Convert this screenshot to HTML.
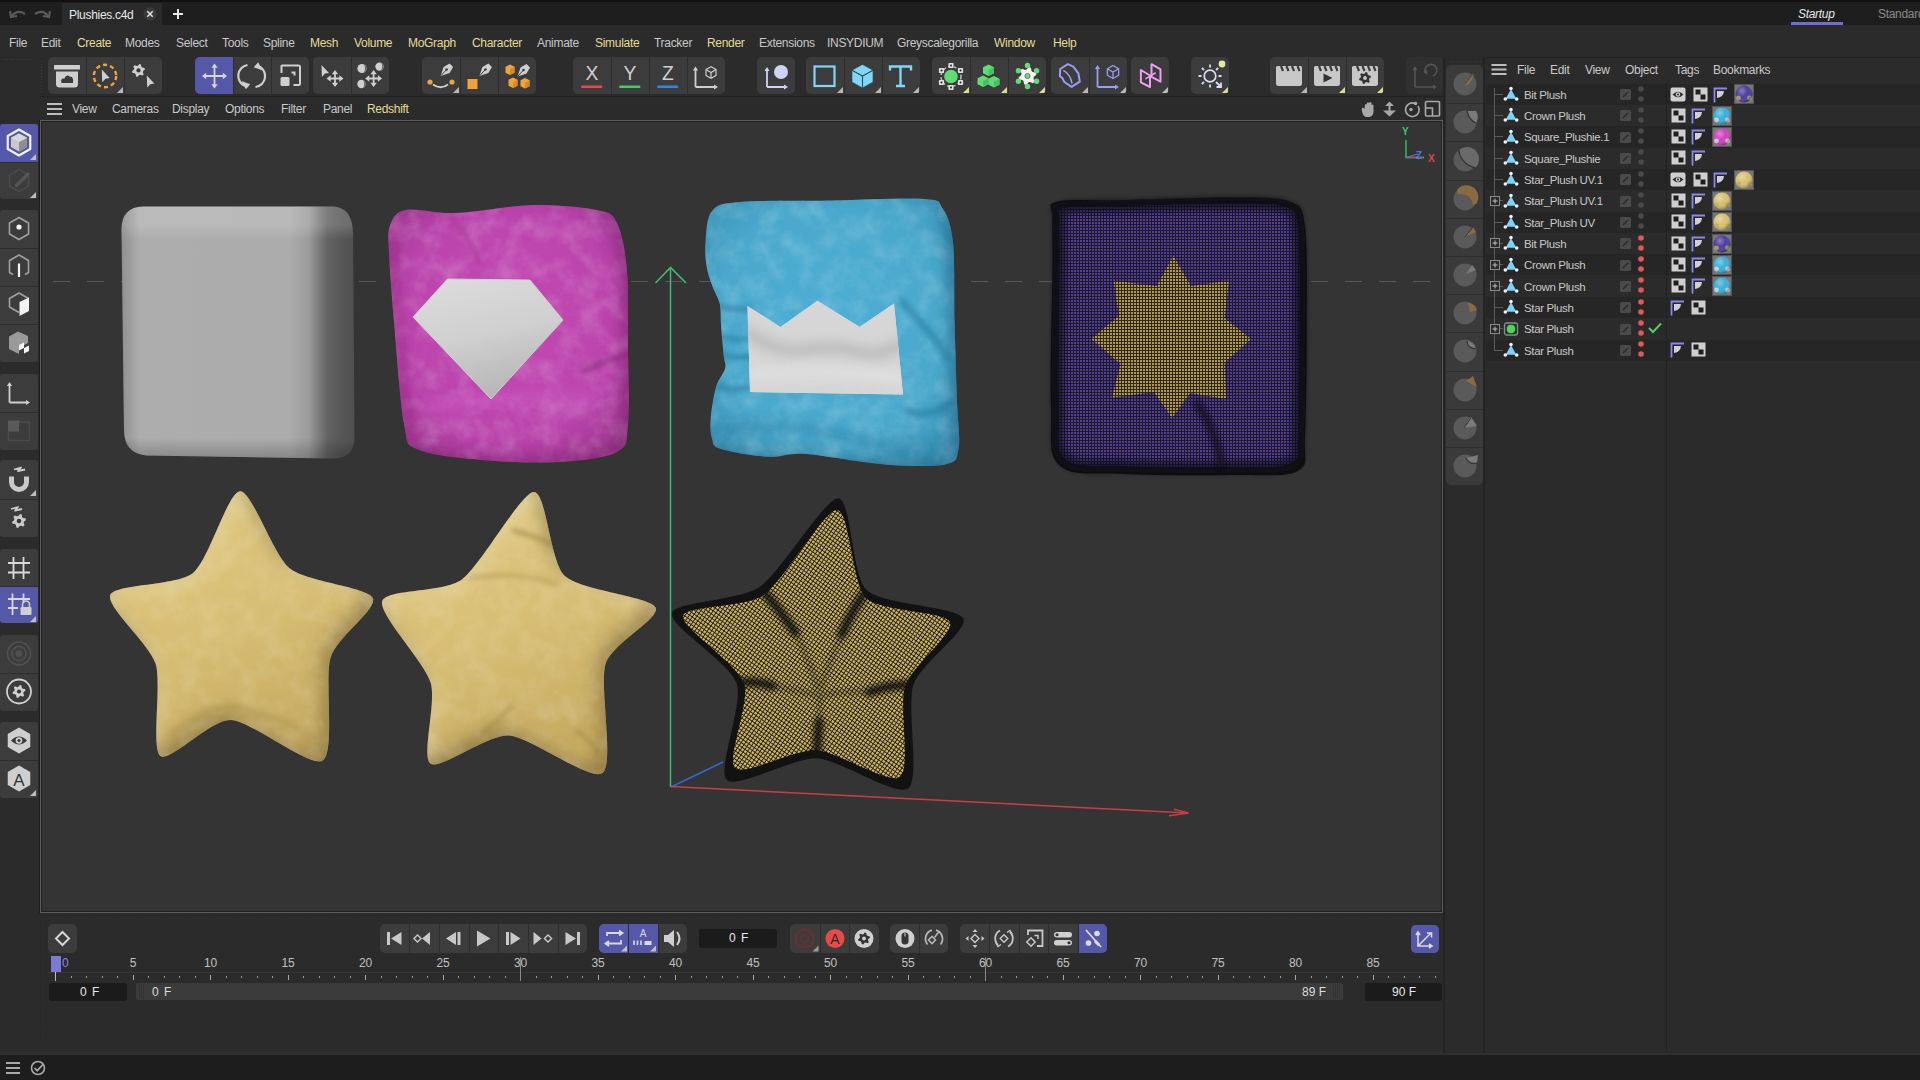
<!DOCTYPE html><html><head><meta charset="utf-8"><style>
*{box-sizing:border-box}
body{margin:0;width:1920px;height:1080px;position:relative;overflow:hidden;background:#2b2b2b;font-family:'Liberation Sans', sans-serif;color:#c8c8c8}
.ab{position:absolute}
.t{position:absolute;font-size:12px;white-space:nowrap;letter-spacing:-0.3px;line-height:14px}
.y{color:#e3dc92}
svg{position:absolute;overflow:visible}
</style></head><body>

<div class="ab" style="left:0;top:0;width:1920px;height:25px;background:#1e1e1e"></div>
<div class="ab" style="left:0;top:0;width:1920px;height:2px;background:#101010"></div>
<div class="ab" style="left:62px;top:3px;width:100px;height:22px;background:#2a2a2a"></div>
<div class="t" style="left:69px;top:8px;color:#e8e8e8">Plushies.c4d</div>
<svg style="left:8px;top:5px" width="50" height="16" viewBox="0 0 50 16" ><path d="M4 11 Q9 4 17 9" stroke="#5a5a5a" stroke-width="2.2" fill="none"/><path d="M2 6 L3 12 L9 11" stroke="#5a5a5a" stroke-width="2.2" fill="none"/><path d="M40 11 Q35 4 27 9" stroke="#5a5a5a" stroke-width="2.2" fill="none"/><path d="M42 6 L41 12 L35 11" stroke="#5a5a5a" stroke-width="2.2" fill="none"/></svg>
<svg style="left:143px;top:7px" width="14" height="14" viewBox="0 0 14 14" ><circle cx="7" cy="7" r="6.5" fill="#3a3a3a"/><path d="M4.3 4.3 L9.7 9.7 M9.7 4.3 L4.3 9.7" stroke="#e0e0e0" stroke-width="1.6"/></svg>
<svg style="left:172px;top:8px" width="12" height="12" viewBox="0 0 12 12" ><path d="M6 1 V11 M1 6 H11" stroke="#e6e6e6" stroke-width="2"/></svg>
<div class="t" style="left:1798px;top:7px;color:#e6e6e6;font-style:italic">Startup</div>
<div class="ab" style="left:1791px;top:22px;width:52px;height:3px;background:#6e6ed0"></div>
<div class="t" style="left:1878px;top:7px;color:#8a8a8a">Standard</div>
<div class="t" style="left:9px;top:36px">File</div>
<div class="t" style="left:41px;top:36px">Edit</div>
<div class="t y" style="left:77px;top:36px">Create</div>
<div class="t" style="left:125px;top:36px">Modes</div>
<div class="t" style="left:176px;top:36px">Select</div>
<div class="t" style="left:222px;top:36px">Tools</div>
<div class="t" style="left:263px;top:36px">Spline</div>
<div class="t y" style="left:310px;top:36px">Mesh</div>
<div class="t y" style="left:354px;top:36px">Volume</div>
<div class="t y" style="left:408px;top:36px">MoGraph</div>
<div class="t y" style="left:472px;top:36px">Character</div>
<div class="t" style="left:537px;top:36px">Animate</div>
<div class="t y" style="left:595px;top:36px">Simulate</div>
<div class="t" style="left:654px;top:36px">Tracker</div>
<div class="t y" style="left:707px;top:36px">Render</div>
<div class="t" style="left:759px;top:36px">Extensions</div>
<div class="t" style="left:827px;top:36px">INSYDIUM</div>
<div class="t" style="left:897px;top:36px">Greyscalegorilla</div>
<div class="t y" style="left:994px;top:36px">Window</div>
<div class="t y" style="left:1053px;top:36px">Help</div>
<div class="ab" style="left:3px;top:58px;width:34px;height:3px;background-image:radial-gradient(circle,#3c3c3c 0.8px,transparent 1px);background-size:3px 3px"></div>
<div class="ab" style="left:40px;top:60px;width:3px;height:33px;background-image:radial-gradient(circle,#3c3c3c 0.8px,transparent 1px);background-size:3px 3px"></div>
<div class="ab" style="left:48px;top:57px;width:114px;height:37px;background:#3c3c3c;border-radius:5px;overflow:hidden">
<svg style="left:0px;top:0px" width="38" height="37" viewBox="0 0 38 37" ><rect x="6" y="8" width="26" height="4.5" rx="0.5" fill="#cfcfcf"/><path d="M8 14.5 H30 V27 Q30 30.5 26.5 30.5 H11.5 Q8 30.5 8 27 Z" fill="#cfcfcf"/><path d="M13.5 26 Q12 21 16.5 21.5 Q18 17 21.5 19.5 Q26 19 25 26 Z" fill="#3c3c3c"/></svg>
<div class="ab" style="left:38px;top:0;width:1px;height:37px;background:#2e2e2e"></div>
<svg style="left:38px;top:0px" width="38" height="37" viewBox="0 0 38 37" ><circle cx="19" cy="19" r="11.2" fill="none" stroke="#f0a33a" stroke-width="2.4" stroke-dasharray="4.2 3"/><path d="M15.8 12.6 L23.675 21.0 L19.475 21.63 L16.220000000000002 25.200000000000003 Z" fill="#cfcfcf"/><path d="M37 30 L37 36 L31 36 Z" fill="#b8b8b8"/></svg>
<div class="ab" style="left:76px;top:0;width:1px;height:37px;background:#2e2e2e"></div>
<svg style="left:76px;top:0px" width="38" height="37" viewBox="0 0 38 37" ><polygon points="15.35,6.96 16.99,7.39 17.35,9.69 18.21,10.55 20.51,10.91 20.94,12.55 19.14,14.01 18.82,15.19 19.66,17.36 18.46,18.56 16.29,17.72 15.11,18.04 13.65,19.84 12.01,19.41 11.65,17.11 10.79,16.25 8.49,15.89 8.06,14.25 9.86,12.79 10.18,11.61 9.34,9.44 10.54,8.24 12.71,9.08 13.89,8.76" fill="#cfcfcf"/><circle cx="14.5" cy="13.4" r="2.145" fill="#3a3a3a"/><path d="M22.8 18.6 L30.3 26.6 L26.3 27.200000000000003 L23.2 30.6 Z" fill="#cfcfcf"/></svg>
</div>
<div class="ab" style="left:195px;top:57px;width:114px;height:37px;background:#3c3c3c;border-radius:5px;overflow:hidden">
<div class="ab" style="left:0px;top:0px;width:38px;height:37px;background:#5558a8"></div>
<svg style="left:0px;top:0px" width="38" height="37" viewBox="0 0 38 37" ><path d="M9.0 19 H30.0 M19.5 8.5 V29.5" stroke="#d6d6d6" stroke-width="1.8"/><path d="M7.0 19 L11.2 15.8 V22.2 Z M32.0 19 L27.8 15.8 V22.2 Z M19.5 6.5 L16.3 10.7 H22.7 Z M19.5 31.5 L16.3 27.3 H22.7 Z" fill="#d6d6d6"/></svg>
<div class="ab" style="left:38px;top:0;width:1px;height:37px;background:#2e2e2e"></div>
<svg style="left:38px;top:0px" width="38" height="37" viewBox="0 0 38 37" ><path d="M14.5 8 A11 11 0 0 0 12 29" stroke="#cfcfcf" stroke-width="2.2" fill="none"/><path d="M9.5 24.5 L13 31 L16.5 27" fill="#cfcfcf" stroke="#cfcfcf" stroke-width="1.5"/><path d="M22.5 30 A11 11 0 0 0 25.5 9" stroke="#cfcfcf" stroke-width="2.2" fill="none"/><path d="M28.5 13 L25 6.5 L21.5 10.5" fill="#cfcfcf" stroke="#cfcfcf" stroke-width="1.5"/></svg>
<div class="ab" style="left:76px;top:0;width:1px;height:37px;background:#2e2e2e"></div>
<svg style="left:76px;top:0px" width="38" height="37" viewBox="0 0 38 37" ><path d="M10.5 16 V10 Q10 8.5 11.5 8.5 H27.5 Q29 8.5 29 10 V26.5 Q29 28 27.5 28 H22.5" stroke="#cfcfcf" stroke-width="2" fill="none"/><rect x="9.5" y="20" width="9" height="9" rx="1.5" fill="#cfcfcf"/><path d="M20.5 15.5 H23.5 V18.5" stroke="#cfcfcf" stroke-width="2" fill="none"/></svg>
</div>
<div class="ab" style="left:313px;top:57px;width:76px;height:37px;background:#3c3c3c;border-radius:5px;overflow:hidden">
<svg style="left:0px;top:0px" width="38" height="37" viewBox="0 0 38 37" ><path d="M8.5 8 L16.0 16.0 L12.0 16.6 L8.9 20.0 Z" fill="#cfcfcf"/><path d="M15.5 21.5 H28.5 M22 15.0 V28.0" stroke="#cfcfcf" stroke-width="1.8"/><path d="M13.5 21.5 L17.7 18.3 V24.7 Z M30.5 21.5 L26.3 18.3 V24.7 Z M22 13.0 L18.8 17.2 H25.2 Z M22 30.0 L18.8 25.8 H25.2 Z" fill="#cfcfcf"/></svg>
<div class="ab" style="left:38px;top:0;width:1px;height:37px;background:#2e2e2e"></div>
<svg style="left:38px;top:0px" width="38" height="37" viewBox="0 0 38 37" ><circle cx="11" cy="11.5" r="4.6" fill="#cfcfcf"/><path d="M11.92 6.99 A4.6 4.6 0 0 1 11.92 16.01 A2.53 4.6 0 0 0 11.92 6.99 Z" fill="#6a6a6a"/><circle cx="28.5" cy="9.6" r="4.2" fill="#cfcfcf"/><path d="M29.34 5.48 A4.2 4.2 0 0 1 29.34 13.72 A2.31 4.2 0 0 0 29.34 5.48 Z" fill="#6a6a6a"/><circle cx="10.5" cy="27" r="4.2" fill="#cfcfcf"/><path d="M11.34 22.88 A4.2 4.2 0 0 1 11.34 31.12 A2.31 4.2 0 0 0 11.34 22.88 Z" fill="#6a6a6a"/><path d="M16.1 21.5 H29.1 M22.6 15.0 V28.0" stroke="#cfcfcf" stroke-width="1.8"/><path d="M14.100000000000001 21.5 L18.3 18.3 V24.7 Z M31.1 21.5 L26.900000000000002 18.3 V24.7 Z M22.6 13.0 L19.400000000000002 17.2 H25.8 Z M22.6 30.0 L19.400000000000002 25.8 H25.8 Z" fill="#cfcfcf"/></svg>
</div>
<div class="ab" style="left:422px;top:57px;width:114px;height:37px;background:#3c3c3c;border-radius:5px;overflow:hidden">
<svg style="left:0px;top:0px" width="38" height="37" viewBox="0 0 38 37" ><g transform="translate(18.6,19) scale(1.0)"><path d="M0 0 L3 -9 L9 -12.5 L12.5 -9 L9 -3 Z" fill="#cfcfcf"/><circle cx="6" cy="-6.5" r="1.3" fill="#3c3c3c"/><path d="M0.5 -0.5 L5.5 -6" stroke="#3c3c3c" stroke-width="1"/></g><path d="M11 27.5 Q18.5 33 26 27.5" stroke="#cfcfcf" stroke-width="2" fill="none"/><circle cx="8" cy="25" r="2.6" fill="#f0a33a"/><circle cx="30" cy="25" r="2.6" fill="#f0a33a"/><path d="M37 30 L37 36 L31 36 Z" fill="#b8b8b8"/></svg>
<div class="ab" style="left:38px;top:0;width:1px;height:37px;background:#2e2e2e"></div>
<svg style="left:38px;top:0px" width="38" height="37" viewBox="0 0 38 37" ><rect x="7.5" y="22" width="10" height="10" fill="#f0a33a"/><g transform="translate(19.4,19) scale(1.0)"><path d="M0 0 L3 -9 L9 -12.5 L12.5 -9 L9 -3 Z" fill="#cfcfcf"/><circle cx="6" cy="-6.5" r="1.3" fill="#3c3c3c"/><path d="M0.5 -0.5 L5.5 -6" stroke="#3c3c3c" stroke-width="1"/></g></svg>
<div class="ab" style="left:76px;top:0;width:1px;height:37px;background:#2e2e2e"></div>
<svg style="left:76px;top:0px" width="38" height="37" viewBox="0 0 38 37" ><g transform="translate(12,12.5)"><path d="M0 -4.95 L4.5 -2.6999999999999997 V3.15 L0 5.3999999999999995 L-4.5 3.15 V-2.6999999999999997 Z" fill="#f0a33a"/><path d="M0 0 V5.3999999999999995 L4.5 3.15 V-2.6999999999999997 Z" fill="#d88a28"/></g><g transform="translate(15,25.5)"><path d="M0 -4.95 L4.5 -2.6999999999999997 V3.15 L0 5.3999999999999995 L-4.5 3.15 V-2.6999999999999997 Z" fill="#f0a33a"/><path d="M0 0 V5.3999999999999995 L4.5 3.15 V-2.6999999999999997 Z" fill="#d88a28"/></g><g transform="translate(27,26)"><path d="M0 -4.95 L4.5 -2.6999999999999997 V3.15 L0 5.3999999999999995 L-4.5 3.15 V-2.6999999999999997 Z" fill="#f0a33a"/><path d="M0 0 V5.3999999999999995 L4.5 3.15 V-2.6999999999999997 Z" fill="#d88a28"/></g><g transform="translate(19.5,19.5) scale(1.0)"><path d="M0 0 L3 -9 L9 -12.5 L12.5 -9 L9 -3 Z" fill="#cfcfcf"/><circle cx="6" cy="-6.5" r="1.3" fill="#3c3c3c"/><path d="M0.5 -0.5 L5.5 -6" stroke="#3c3c3c" stroke-width="1"/></g></svg>
</div>
<div class="ab" style="left:573px;top:57px;width:152px;height:37px;background:#3c3c3c;border-radius:5px;overflow:hidden">
<svg style="left:0px;top:0px" width="38" height="37" viewBox="0 0 38 37" ><text x="19" y="23.5" font-size="21" text-anchor="middle" fill="#cfcfcf" font-family="Liberation Sans" transform="translate(19,0) scale(0.92,1) translate(-19,0)">X</text><rect x="8" y="28.5" width="21.5" height="2.4" rx="1.2" fill="#e5484d"/></svg>
<div class="ab" style="left:38px;top:0;width:1px;height:37px;background:#2e2e2e"></div>
<svg style="left:38px;top:0px" width="38" height="37" viewBox="0 0 38 37" ><text x="19" y="23.5" font-size="21" text-anchor="middle" fill="#cfcfcf" font-family="Liberation Sans" transform="translate(19,0) scale(0.92,1) translate(-19,0)">Y</text><rect x="8" y="28.5" width="21.5" height="2.4" rx="1.2" fill="#3fd160"/></svg>
<div class="ab" style="left:76px;top:0;width:1px;height:37px;background:#2e2e2e"></div>
<svg style="left:76px;top:0px" width="38" height="37" viewBox="0 0 38 37" ><text x="19" y="23.5" font-size="21" text-anchor="middle" fill="#cfcfcf" font-family="Liberation Sans" transform="translate(19,0) scale(0.92,1) translate(-19,0)">Z</text><rect x="8" y="28.5" width="21.5" height="2.4" rx="1.2" fill="#2f86e6"/></svg>
<div class="ab" style="left:114px;top:0;width:1px;height:37px;background:#2e2e2e"></div>
<svg style="left:114px;top:0px" width="38" height="37" viewBox="0 0 38 37" ><path d="M8.5 30 V12.5 M8.5 30 H28" stroke="#cfcfcf" stroke-width="1.8" fill="none"/><path d="M8.5 9.5 L5.9 13.5 H11.1 Z M31 30 L27 27.4 V32.6 Z" fill="#cfcfcf"/><polygon points="24.00,9.70 29.02,12.60 29.02,18.40 24.00,21.30 18.98,18.40 18.98,12.60" fill="none" stroke="#cfcfcf" stroke-width="1.2" stroke-linejoin="round"/><path d="M18.98 12.60 L24 15.5 L29.02 12.60 M24 15.5 L24.00 21.30" stroke="#cfcfcf" stroke-width="1.2" fill="none"/></svg>
</div>
<div class="ab" style="left:757px;top:57px;width:38px;height:37px;background:#3c3c3c;border-radius:5px;overflow:hidden">
<svg style="left:0px;top:0px" width="38" height="37" viewBox="0 0 38 37" ><path d="M10 30 V13 M10 30 H28" stroke="#cfd3f5" stroke-width="1.8" fill="none"/><path d="M10 10 L7.4 14 H12.6 Z M31 30 L27 27.4 V32.6 Z" fill="#cfd3f5"/><circle cx="24" cy="15" r="7" fill="#cfd3f5"/></svg>
</div>
<div class="ab" style="left:806px;top:57px;width:114px;height:37px;background:#3c3c3c;border-radius:5px;overflow:hidden">
<svg style="left:0px;top:0px" width="38" height="37" viewBox="0 0 38 37" ><rect x="8.5" y="9.5" width="20" height="19.5" fill="none" stroke="#7fd6f7" stroke-width="2.2"/><path d="M37 30 L37 36 L31 36 Z" fill="#b8b8b8"/></svg>
<div class="ab" style="left:38px;top:0;width:1px;height:37px;background:#2e2e2e"></div>
<svg style="left:38px;top:0px" width="38" height="37" viewBox="0 0 38 37" ><path d="M18.5 7.5 L29 13.2 V25 L18.5 31 L8 25 V13.2 Z" fill="#7fd6f7" stroke="#2c4a55" stroke-width="0.6"/><path d="M8 13.2 L18.5 19 L29 13.2 M18.5 19 V31" stroke="#2c4e5a" stroke-width="1.1" fill="none"/><path d="M37 30 L37 36 L31 36 Z" fill="#b8b8b8"/></svg>
<div class="ab" style="left:76px;top:0;width:1px;height:37px;background:#2e2e2e"></div>
<svg style="left:76px;top:0px" width="38" height="37" viewBox="0 0 38 37" ><path d="M8 13.5 V9.5 H29 V13.5 M18.5 9.5 V29 M14 29 H23" stroke="#7fd6f7" stroke-width="2.4" fill="none"/><path d="M37 30 L37 36 L31 36 Z" fill="#b8b8b8"/></svg>
</div>
<div class="ab" style="left:932px;top:57px;width:114px;height:37px;background:#3c3c3c;border-radius:5px;overflow:hidden">
<svg style="left:0px;top:0px" width="38" height="37" viewBox="0 0 38 37" ><circle cx="19" cy="19.5" r="10" fill="none" stroke="#bdbdbd" stroke-width="1.5" stroke-dasharray="3 2.5"/><circle cx="19" cy="19.5" r="6.8" fill="#5fdc74"/><rect x="16.4" y="5.9" width="5.2" height="5.2" rx="0.8" fill="#e0e0e0"/><circle cx="19" cy="8.5" r="1" fill="#222"/><rect x="16.4" y="27.9" width="5.2" height="5.2" rx="0.8" fill="#e0e0e0"/><circle cx="19" cy="30.5" r="1" fill="#222"/><rect x="6.9" y="10.9" width="5.2" height="5.2" rx="0.8" fill="#e0e0e0"/><circle cx="9.5" cy="13.5" r="1" fill="#222"/><rect x="25.9" y="10.9" width="5.2" height="5.2" rx="0.8" fill="#e0e0e0"/><circle cx="28.5" cy="13.5" r="1" fill="#222"/><rect x="6.9" y="22.9" width="5.2" height="5.2" rx="0.8" fill="#e0e0e0"/><circle cx="9.5" cy="25.5" r="1" fill="#222"/><rect x="25.9" y="22.9" width="5.2" height="5.2" rx="0.8" fill="#e0e0e0"/><circle cx="28.5" cy="25.5" r="1" fill="#222"/><path d="M37 30 L37 36 L31 36 Z" fill="#dedc8a"/></svg>
<div class="ab" style="left:38px;top:0;width:1px;height:37px;background:#2e2e2e"></div>
<svg style="left:38px;top:0px" width="38" height="37" viewBox="0 0 38 37" ><g transform="translate(18.5,13)"><path d="M0 -5.5 L5.5 -2.75 V3.3 L0 6.050000000000001 L-5.5 3.3 V-2.75 Z" fill="#5fdc74"/><path d="M0 0 V6.050000000000001 L5.5 3.3 V-2.75 Z" fill="#4cbf60"/></g><g transform="translate(13,24)"><path d="M0 -5.5 L5.5 -2.75 V3.3 L0 6.050000000000001 L-5.5 3.3 V-2.75 Z" fill="#5fdc74"/><path d="M0 0 V6.050000000000001 L5.5 3.3 V-2.75 Z" fill="#4cbf60"/></g><g transform="translate(24,24.5)"><path d="M0 -5.5 L5.5 -2.75 V3.3 L0 6.050000000000001 L-5.5 3.3 V-2.75 Z" fill="#5fdc74"/><path d="M0 0 V6.050000000000001 L5.5 3.3 V-2.75 Z" fill="#4cbf60"/></g><path d="M37 30 L37 36 L31 36 Z" fill="#dedc8a"/></svg>
<div class="ab" style="left:76px;top:0;width:1px;height:37px;background:#2e2e2e"></div>
<svg style="left:76px;top:0px" width="38" height="37" viewBox="0 0 38 37" ><polygon points="20.67,10.08 22.94,10.69 23.44,13.86 24.64,15.06 27.81,15.56 28.42,17.83 25.92,19.85 25.49,21.48 26.64,24.48 24.98,26.14 21.98,24.99 20.35,25.42 18.33,27.92 16.06,27.31 15.56,24.14 14.36,22.94 11.19,22.44 10.58,20.17 13.08,18.15 13.51,16.52 12.36,13.52 14.02,11.86 17.02,13.01 18.65,12.58" fill="#f2f2f2"/><circle cx="19.5" cy="19" r="2.8" fill="#3c3c3c"/><circle cx="19.5" cy="19" r="2.4" fill="#5fdc74"/><circle cx="19.50" cy="8.50" r="2.7" fill="#5fdc74"/><circle cx="10.41" cy="13.75" r="2.7" fill="#5fdc74"/><circle cx="10.41" cy="24.25" r="2.7" fill="#5fdc74"/><circle cx="19.50" cy="29.50" r="2.7" fill="#5fdc74"/><circle cx="28.59" cy="24.25" r="2.7" fill="#5fdc74"/><circle cx="28.59" cy="13.75" r="2.7" fill="#5fdc74"/><path d="M37 30 L37 36 L31 36 Z" fill="#dedc8a"/></svg>
</div>
<div class="ab" style="left:1051px;top:57px;width:76px;height:37px;background:#3c3c3c;border-radius:5px;overflow:hidden">
<svg style="left:0px;top:0px" width="38" height="37" viewBox="0 0 38 37" ><path d="M9.2 12 L16.8 7.2 L22.3 9.6 L27.4 16.4 L28.8 24.7 L20.5 29.8 L13.4 25 L11.3 20.9 L8.9 19.2 Z" fill="none" stroke="#9c9cf5" stroke-width="2" stroke-linejoin="round"/><path d="M12.7 13.7 Q19 17 20.9 26" stroke="#9c9cf5" stroke-width="1.5" fill="none" stroke-linecap="round"/><path d="M37 30 L37 36 L31 36 Z" fill="#b8b8b8"/></svg>
<div class="ab" style="left:38px;top:0;width:1px;height:37px;background:#2e2e2e"></div>
<svg style="left:38px;top:0px" width="38" height="37" viewBox="0 0 38 37" ><path d="M8.5 30 V11 M8.5 30 H27" stroke="#9c9cf5" stroke-width="1.8" fill="none"/><path d="M8.5 8 L5.9 12 H11.1 Z M30 30 L26 27.4 V32.6 Z" fill="#9c9cf5"/><polygon points="24.00,8.50 29.63,11.75 29.63,18.25 24.00,21.50 18.37,18.25 18.37,11.75" fill="none" stroke="#9c9cf5" stroke-width="1.3" stroke-linejoin="round"/><path d="M18.37 11.75 L24 15 L29.63 11.75 M24 15 L24.00 21.50" stroke="#9c9cf5" stroke-width="1.3" fill="none"/><path d="M37 30 L37 36 L31 36 Z" fill="#b8b8b8"/></svg>
</div>
<div class="ab" style="left:1131px;top:57px;width:38px;height:37px;background:#3c3c3c;border-radius:5px;overflow:hidden">
<svg style="left:0px;top:0px" width="38" height="37" viewBox="0 0 38 37" ><path d="M9.9 13 L19 18.5 V30 L9.9 25.3 Z M20.5 7.2 L29.5 12.3 V24.7 L20.5 19.9 Z" fill="none" stroke="#ee9df2" stroke-width="2" stroke-linejoin="round"/><path d="M14.4 21.9 L24.7 15.8" stroke="#ee9df2" stroke-width="1.6"/><path d="M37 30 L37 36 L31 36 Z" fill="#b8b8b8"/></svg>
</div>
<div class="ab" style="left:1191px;top:57px;width:38px;height:37px;background:#3c3c3c;border-radius:5px;overflow:hidden">
<svg style="left:0px;top:0px" width="38" height="37" viewBox="0 0 38 37" ><circle cx="19" cy="19" r="5.8" fill="none" stroke="#d7def5" stroke-width="1.7"/><path d="M27.50 19.00 L30.50 19.00" stroke="#d7def5" stroke-width="1.8"/><path d="M19.00 27.50 L19.00 30.50" stroke="#d7def5" stroke-width="1.8"/><path d="M12.99 25.01 L10.87 27.13" stroke="#d7def5" stroke-width="1.8"/><path d="M10.50 19.00 L7.50 19.00" stroke="#d7def5" stroke-width="1.8"/><path d="M12.99 12.99 L10.87 10.87" stroke="#d7def5" stroke-width="1.8"/><path d="M19.00 10.50 L19.00 7.50" stroke="#d7def5" stroke-width="1.8"/><path d="M25.01 12.99 L27.13 10.87" stroke="#d7def5" stroke-width="1.8"/><path d="M25 25 L30 30 M30 25.5 V30 H25.5" stroke="#d7def5" stroke-width="1.8" fill="none"/><circle cx="31" cy="7" r="3.4" fill="#e6e6a6"/><path d="M37 30 L37 36 L31 36 Z" fill="#dedc8a"/></svg>
</div>
<div class="ab" style="left:1270px;top:57px;width:114px;height:37px;background:#3c3c3c;border-radius:5px;overflow:hidden">
<svg style="left:0px;top:0px" width="38" height="37" viewBox="0 0 38 37" ><path d="M6 10.5 Q6 9 7.5 9 H30.5 Q32 9 32 10.5 V26.5 Q32 29 29.5 29 H8.5 Q6 29 6 26.5 Z" fill="#c8c8c8"/><path d="M11 9 L13 14 M16.5 9 L18.5 14 M22 9 L24 14 M27.5 9 L29.5 14" stroke="#3c3c3c" stroke-width="2.2"/><path d="M37 30 L37 36 L31 36 Z" fill="#b8b8b8"/></svg>
<div class="ab" style="left:38px;top:0;width:1px;height:37px;background:#2e2e2e"></div>
<svg style="left:38px;top:0px" width="38" height="37" viewBox="0 0 38 37" ><path d="M6 10.5 Q6 9 7.5 9 H30.5 Q32 9 32 10.5 V26.5 Q32 29 29.5 29 H8.5 Q6 29 6 26.5 Z" fill="#c8c8c8"/><path d="M11 9 L13 14 M16.5 9 L18.5 14 M22 9 L24 14 M27.5 9 L29.5 14" stroke="#3c3c3c" stroke-width="2.2"/><path d="M15.5 16.5 L24.5 21 L15.5 25.5 Z" fill="#333"/><path d="M37 30 L37 36 L31 36 Z" fill="#dedc8a"/></svg>
<div class="ab" style="left:76px;top:0;width:1px;height:37px;background:#2e2e2e"></div>
<svg style="left:76px;top:0px" width="38" height="37" viewBox="0 0 38 37" ><path d="M6 10.5 Q6 9 7.5 9 H30.5 Q32 9 32 10.5 V26.5 Q32 29 29.5 29 H8.5 Q6 29 6 26.5 Z" fill="#c8c8c8"/><path d="M11 9 L13 14 M16.5 9 L18.5 14 M22 9 L24 14 M27.5 9 L29.5 14" stroke="#3c3c3c" stroke-width="2.2"/><polygon points="19.78,15.05 21.30,15.46 21.63,17.57 22.43,18.37 24.54,18.70 24.95,20.22 23.28,21.56 22.99,22.65 23.76,24.65 22.65,25.76 20.65,24.99 19.56,25.28 18.22,26.95 16.70,26.54 16.37,24.43 15.57,23.63 13.46,23.30 13.05,21.78 14.72,20.44 15.01,19.35 14.24,17.35 15.35,16.24 17.35,17.01 18.44,16.72" fill="#333"/><circle cx="19" cy="21" r="1.9" fill="#c8c8c8"/><path d="M37 30 L37 36 L31 36 Z" fill="#dedc8a"/></svg>
</div>
<div class="ab" style="left:1406px;top:57px;width:38px;height:37px;background:#303030;border-radius:5px;overflow:hidden">
<svg style="left:0px;top:0px" width="38" height="37" viewBox="0 0 38 37" ><path d="M9 30 V12 M9 30 H28" stroke="#555555" stroke-width="1.6" fill="none"/><path d="M9 9 L6.4 13 H11.6 Z M31 30 L27 27.4 V32.6 Z" fill="#555555"/><path d="M19.5 16 A6 6 0 1 1 27 19" stroke="#555555" stroke-width="1.6" fill="none"/><path d="M17 15 L21 12.5 L21.5 17.5 Z" fill="#555555"/></svg>
</div>
<div class="ab" style="left:40px;top:96px;width:1404px;height:24px;background:#2b2b2b;border-top:1px solid #222"></div>
<svg style="left:47px;top:102px" width="16" height="14" viewBox="0 0 16 14" ><path d="M0 2 H15 M0 7 H15 M0 12 H15" stroke="#bdbdbd" stroke-width="2"/></svg>
<div class="t" style="left:72px;top:102px">View</div>
<div class="t" style="left:112px;top:102px">Cameras</div>
<div class="t" style="left:172px;top:102px">Display</div>
<div class="t" style="left:225px;top:102px">Options</div>
<div class="t" style="left:281px;top:102px">Filter</div>
<div class="t" style="left:323px;top:102px">Panel</div>
<div class="t y" style="left:367px;top:102px">Redshift</div>
<svg style="left:1360px;top:100px" width="84" height="18" viewBox="0 0 84 18" ><path d="M4 16 Q1 11 2 8 Q3 7 4.5 9 L5 5 Q5.5 3.5 6.5 4.5 L7 3 Q8 1.5 9 3 L9.5 2.5 Q10.8 1.5 11.5 3 V5 Q12.8 4 13.5 5.5 L13.5 12 Q13 16 10 17 H6 Z" fill="#a8a8a8"/><path d="M29.5 1.5 L25 6 H34 Z M29.5 16.5 L23 10.5 H36 Z" fill="#a8a8a8"/><rect x="28.5" y="5" width="2" height="6" fill="#a8a8a8"/><path d="M55 3.5 A6.8 6.8 0 1 0 58 6" stroke="#a8a8a8" stroke-width="1.6" fill="none"/><circle cx="51" cy="9.5" r="1.7" fill="#a8a8a8"/><circle cx="55.5" cy="3.5" r="1.8" fill="#a8a8a8"/><rect x="65.5" y="1.5" width="14" height="14.5" rx="1" fill="none" stroke="#a8a8a8" stroke-width="1.6"/><path d="M65.5 8 H72.5 V16" stroke="#a8a8a8" stroke-width="1.6" fill="none"/></svg>
<div class="ab" style="left:40px;top:120px;width:1403px;height:793px;background:#343434;border:1px solid #5c5c5c;box-shadow:inset 0 0 0 1px #222"></div>
<svg style="left:0;top:0" width="1920" height="1080" viewBox="0 0 1920 1080"><defs><clipPath id="vpc"><rect x="41" y="121" width="1401" height="791"/></clipPath><filter id="mottle" x="0" y="0" width="100%" height="100%"><feTurbulence type="fractalNoise" baseFrequency="0.05" numOctaves="4" seed="7" result="n"/><feColorMatrix in="n" type="matrix" values="0 0 0 0 1  0 0 0 0 1  0 0 0 0 1  1.3 0 0 0 -0.5" result="m"/><feComposite in="m" in2="SourceGraphic" operator="in" result="c"/></filter><pattern id="meshP" width="3" height="3" patternUnits="userSpaceOnUse"><rect width="3" height="3" fill="#5a429e"/><rect x="0" y="2" width="3" height="1" fill="#1c182c"/><rect x="2" y="0" width="1" height="3" fill="#1c182c"/></pattern><pattern id="meshY" width="3" height="3" patternUnits="userSpaceOnUse"><rect width="3" height="3" fill="#b09a52"/><rect x="0" y="2" width="3" height="1" fill="#2e2814"/><rect x="2" y="0" width="1" height="3" fill="#2e2814"/></pattern><pattern id="meshY2" width="3.4" height="3.4" patternUnits="userSpaceOnUse" patternTransform="rotate(35)"><rect width="3.4" height="3.4" fill="#d0b664"/><rect x="0" y="2.5" width="3.4" height="0.9" fill="#1d1a10"/><rect x="2.5" y="0" width="0.9" height="3.4" fill="#1d1a10"/></pattern><linearGradient id="gcH" x1="122" y1="0" x2="355" y2="0" gradientUnits="userSpaceOnUse"><stop offset="0" stop-color="#a9a9a9"/><stop offset="0.05" stop-color="#adadad"/><stop offset="0.72" stop-color="#acacac"/><stop offset="0.8" stop-color="#9c9c9c"/><stop offset="0.88" stop-color="#646464"/><stop offset="0.94" stop-color="#575757"/><stop offset="1" stop-color="#4f4f4f"/></linearGradient><linearGradient id="gcV" x1="0" y1="207" x2="0" y2="458" gradientUnits="userSpaceOnUse"><stop offset="0" stop-color="#ffffff" stop-opacity="0.16"/><stop offset="0.07" stop-color="#ffffff" stop-opacity="0.16"/><stop offset="0.13" stop-color="#ffffff" stop-opacity="0"/><stop offset="0.92" stop-color="#000" stop-opacity="0"/><stop offset="0.97" stop-color="#000" stop-opacity="0.14"/><stop offset="1" stop-color="#000" stop-opacity="0.2"/></linearGradient><linearGradient id="gcL" x1="122" y1="0" x2="140" y2="0" gradientUnits="userSpaceOnUse"><stop offset="0" stop-color="#000" stop-opacity="0.15"/><stop offset="1" stop-color="#000" stop-opacity="0"/></linearGradient><linearGradient id="starG" x1="0.2" y1="0" x2="0.6" y2="1"><stop offset="0" stop-color="#e0ca84"/><stop offset="0.5" stop-color="#d8be74"/><stop offset="1" stop-color="#c4a85e"/></linearGradient><radialGradient id="pinkG" cx="0.5" cy="0.45" r="0.65"><stop offset="0" stop-color="#c348b4"/><stop offset="0.7" stop-color="#ba44ac"/><stop offset="1" stop-color="#a03a92"/></radialGradient><radialGradient id="blueG" cx="0.5" cy="0.45" r="0.65"><stop offset="0" stop-color="#4eaed4"/><stop offset="0.7" stop-color="#4aa8cc"/><stop offset="1" stop-color="#3c94b8"/></radialGradient><linearGradient id="diaG" x1="0" y1="0" x2="0.3" y2="1"><stop offset="0" stop-color="#dcdcdc"/><stop offset="0.55" stop-color="#d0d0d0"/><stop offset="1" stop-color="#b8b8b8"/></linearGradient><linearGradient id="crownG" x1="0" y1="0" x2="0" y2="1"><stop offset="0" stop-color="#dadada"/><stop offset="1" stop-color="#d8d8d8"/></linearGradient><filter id="blur3" filterUnits="userSpaceOnUse" x="0" y="0" width="1920" height="1080"><feGaussianBlur stdDeviation="2.5"/></filter><filter id="blur6" filterUnits="userSpaceOnUse" x="0" y="0" width="1920" height="1080"><feGaussianBlur stdDeviation="6"/></filter><filter id="inner" filterUnits="userSpaceOnUse" x="0" y="0" width="1920" height="1080"><feGaussianBlur in="SourceAlpha" stdDeviation="9" result="b"/><feOffset in="b" dx="-7" dy="-8" result="o"/><feComposite in="SourceAlpha" in2="o" operator="out" result="inv"/><feFlood flood-color="#3a2a00" flood-opacity="0.55"/><feComposite in2="inv" operator="in" result="sh"/><feGaussianBlur in="SourceAlpha" stdDeviation="8" result="b2"/><feOffset in="b2" dx="6" dy="7" result="o2"/><feComposite in="SourceAlpha" in2="o2" operator="out" result="inv2"/><feFlood flood-color="#fff6d0" flood-opacity="0.18"/><feComposite in2="inv2" operator="in" result="hl"/><feMerge><feMergeNode in="SourceGraphic"/><feMergeNode in="sh"/><feMergeNode in="hl"/></feMerge></filter><filter id="innerC" filterUnits="userSpaceOnUse" x="0" y="0" width="1920" height="1080"><feGaussianBlur in="SourceAlpha" stdDeviation="8" result="b"/><feOffset in="b" dx="-7" dy="-5" result="o"/><feComposite in="SourceAlpha" in2="o" operator="out" result="inv"/><feFlood flood-color="#000" flood-opacity="0.3"/><feComposite in2="inv" operator="in" result="sh"/><feMerge><feMergeNode in="SourceGraphic"/><feMergeNode in="sh"/></feMerge></filter></defs><g clip-path="url(#vpc)"><path d="M53 281.5 H1442" stroke="#585858" stroke-width="1" stroke-dasharray="17 17"/><path d="M143 206.5 L334 206.5 Q352 208 353 232 L354.5 436 Q355 458 334 458.5 L146 455.5 Q124.5 453 124 431 L121.5 229 Q122 207 143 206.5 Z" fill="url(#gcH)"/><path d="M143 206.5 L334 206.5 Q352 208 353 232 L354.5 436 Q355 458 334 458.5 L146 455.5 Q124.5 453 124 431 L121.5 229 Q122 207 143 206.5 Z" fill="url(#gcV)"/><path d="M143 206.5 L334 206.5 Q352 208 353 232 L354.5 436 Q355 458 334 458.5 L146 455.5 Q124.5 453 124 431 L121.5 229 Q122 207 143 206.5 Z" fill="url(#gcL)"/><path d="M390.0 225.5 C392.8 218.2 394.5 212.1 405.5 210.0 C416.5 207.9 434.8 213.8 456.0 213.0 C477.2 212.2 509.6 205.5 533.0 205.0 C556.4 204.5 582.5 207.0 596.5 210.0 C610.5 213.0 611.9 212.8 617.0 223.0 C622.1 233.2 625.2 250.2 627.0 271.0 C628.8 291.8 627.8 322.5 628.0 348.0 C628.2 373.5 629.8 406.7 628.0 424.0 C626.2 441.3 628.7 445.7 617.0 452.0 C605.3 458.3 580.5 460.7 558.0 462.0 C535.5 463.3 505.3 462.1 482.0 460.0 C458.7 457.9 431.0 455.6 418.0 449.6 C405.0 443.6 408.0 445.3 404.0 424.0 C400.0 402.7 396.5 350.4 394.0 322.0 C391.5 293.6 389.7 269.7 389.0 253.6 C388.3 237.5 387.2 232.8 390.0 225.5 Z" fill="url(#pinkG)" filter="url(#innerC)"/><path d="M390.0 225.5 C392.8 218.2 394.5 212.1 405.5 210.0 C416.5 207.9 434.8 213.8 456.0 213.0 C477.2 212.2 509.6 205.5 533.0 205.0 C556.4 204.5 582.5 207.0 596.5 210.0 C610.5 213.0 611.9 212.8 617.0 223.0 C622.1 233.2 625.2 250.2 627.0 271.0 C628.8 291.8 627.8 322.5 628.0 348.0 C628.2 373.5 629.8 406.7 628.0 424.0 C626.2 441.3 628.7 445.7 617.0 452.0 C605.3 458.3 580.5 460.7 558.0 462.0 C535.5 463.3 505.3 462.1 482.0 460.0 C458.7 457.9 431.0 455.6 418.0 449.6 C405.0 443.6 408.0 445.3 404.0 424.0 C400.0 402.7 396.5 350.4 394.0 322.0 C391.5 293.6 389.7 269.7 389.0 253.6 C388.3 237.5 387.2 232.8 390.0 225.5 Z" fill="#d27cc6" filter="url(#mottle)" opacity="0.27"/><clipPath id="pkc"><path d="M390.0 225.5 C392.8 218.2 394.5 212.1 405.5 210.0 C416.5 207.9 434.8 213.8 456.0 213.0 C477.2 212.2 509.6 205.5 533.0 205.0 C556.4 204.5 582.5 207.0 596.5 210.0 C610.5 213.0 611.9 212.8 617.0 223.0 C622.1 233.2 625.2 250.2 627.0 271.0 C628.8 291.8 627.8 322.5 628.0 348.0 C628.2 373.5 629.8 406.7 628.0 424.0 C626.2 441.3 628.7 445.7 617.0 452.0 C605.3 458.3 580.5 460.7 558.0 462.0 C535.5 463.3 505.3 462.1 482.0 460.0 C458.7 457.9 431.0 455.6 418.0 449.6 C405.0 443.6 408.0 445.3 404.0 424.0 C400.0 402.7 396.5 350.4 394.0 322.0 C391.5 293.6 389.7 269.7 389.0 253.6 C388.3 237.5 387.2 232.8 390.0 225.5 Z"/></clipPath><g clip-path="url(#pkc)"><path d="M580 372 Q605 362 632 352" stroke="#7a1a6a" stroke-width="6" fill="none" opacity="0.45" filter="url(#blur3)"/><path d="M392 240 Q398 340 408 440" stroke="#8a2278" stroke-width="12" fill="none" opacity="0.35" filter="url(#blur6)"/><path d="M400 455 Q500 470 620 455" stroke="#8a2278" stroke-width="12" fill="none" opacity="0.35" filter="url(#blur6)"/><path d="M625 230 Q632 340 628 450" stroke="#8a2278" stroke-width="14" fill="none" opacity="0.3" filter="url(#blur6)"/><path d="M450 215 Q470 240 480 262" stroke="#8a2278" stroke-width="5" fill="none" opacity="0.3" filter="url(#blur3)"/><path d="M420 410 Q520 390 600 400" stroke="#e070d4" stroke-width="14" fill="none" opacity="0.25" filter="url(#blur6)"/></g><path d="M447.5 279 L530 280 L563 320 L491 399 L413 317 Z" fill="url(#diaG)" stroke="#cfcfcf" stroke-width="1" stroke-linejoin="round"/><path d="M712.0 211.0 C717.7 204.3 719.6 203.7 739.6 201.9 C759.6 200.2 801.3 201.0 832.0 200.5 C862.7 200.0 905.5 197.7 924.0 199.0 C942.5 200.3 937.9 201.2 942.7 208.5 C947.5 215.8 951.0 223.9 953.0 242.8 C955.0 261.7 953.9 295.6 954.6 322.0 C955.3 348.4 956.3 379.9 957.0 401.0 C957.7 422.1 960.5 438.0 958.6 448.6 C956.7 459.2 957.7 461.8 945.4 464.4 C933.1 467.0 908.0 466.1 884.7 464.4 C861.4 462.6 825.0 455.2 805.5 453.9 C786.0 452.6 781.8 457.6 767.7 456.8 C753.6 456.0 730.3 452.0 721.0 449.0 C711.7 446.0 713.7 443.9 712.0 438.7 C710.3 433.5 710.0 426.6 710.7 418.0 C711.4 409.4 713.6 395.1 716.0 386.9 C718.4 378.7 723.7 374.0 725.0 368.8 C726.3 363.6 724.4 363.2 723.7 355.8 C723.0 348.4 721.6 333.3 721.0 324.7 C720.4 316.1 721.1 310.1 719.8 304.0 C718.5 297.9 715.5 294.4 713.3 288.4 C711.1 282.3 708.1 275.5 706.8 267.7 C705.5 259.9 704.6 251.2 705.5 241.8 C706.4 232.4 706.3 217.7 712.0 211.0 Z" fill="url(#blueG)" filter="url(#innerC)"/><path d="M712.0 211.0 C717.7 204.3 719.6 203.7 739.6 201.9 C759.6 200.2 801.3 201.0 832.0 200.5 C862.7 200.0 905.5 197.7 924.0 199.0 C942.5 200.3 937.9 201.2 942.7 208.5 C947.5 215.8 951.0 223.9 953.0 242.8 C955.0 261.7 953.9 295.6 954.6 322.0 C955.3 348.4 956.3 379.9 957.0 401.0 C957.7 422.1 960.5 438.0 958.6 448.6 C956.7 459.2 957.7 461.8 945.4 464.4 C933.1 467.0 908.0 466.1 884.7 464.4 C861.4 462.6 825.0 455.2 805.5 453.9 C786.0 452.6 781.8 457.6 767.7 456.8 C753.6 456.0 730.3 452.0 721.0 449.0 C711.7 446.0 713.7 443.9 712.0 438.7 C710.3 433.5 710.0 426.6 710.7 418.0 C711.4 409.4 713.6 395.1 716.0 386.9 C718.4 378.7 723.7 374.0 725.0 368.8 C726.3 363.6 724.4 363.2 723.7 355.8 C723.0 348.4 721.6 333.3 721.0 324.7 C720.4 316.1 721.1 310.1 719.8 304.0 C718.5 297.9 715.5 294.4 713.3 288.4 C711.1 282.3 708.1 275.5 706.8 267.7 C705.5 259.9 704.6 251.2 705.5 241.8 C706.4 232.4 706.3 217.7 712.0 211.0 Z" fill="#86c8e0" filter="url(#mottle)" opacity="0.27"/><clipPath id="blc"><path d="M712.0 211.0 C717.7 204.3 719.6 203.7 739.6 201.9 C759.6 200.2 801.3 201.0 832.0 200.5 C862.7 200.0 905.5 197.7 924.0 199.0 C942.5 200.3 937.9 201.2 942.7 208.5 C947.5 215.8 951.0 223.9 953.0 242.8 C955.0 261.7 953.9 295.6 954.6 322.0 C955.3 348.4 956.3 379.9 957.0 401.0 C957.7 422.1 960.5 438.0 958.6 448.6 C956.7 459.2 957.7 461.8 945.4 464.4 C933.1 467.0 908.0 466.1 884.7 464.4 C861.4 462.6 825.0 455.2 805.5 453.9 C786.0 452.6 781.8 457.6 767.7 456.8 C753.6 456.0 730.3 452.0 721.0 449.0 C711.7 446.0 713.7 443.9 712.0 438.7 C710.3 433.5 710.0 426.6 710.7 418.0 C711.4 409.4 713.6 395.1 716.0 386.9 C718.4 378.7 723.7 374.0 725.0 368.8 C726.3 363.6 724.4 363.2 723.7 355.8 C723.0 348.4 721.6 333.3 721.0 324.7 C720.4 316.1 721.1 310.1 719.8 304.0 C718.5 297.9 715.5 294.4 713.3 288.4 C711.1 282.3 708.1 275.5 706.8 267.7 C705.5 259.9 704.6 251.2 705.5 241.8 C706.4 232.4 706.3 217.7 712.0 211.0 Z"/></clipPath><g clip-path="url(#blc)"><path d="M718 306 Q735 312 752 308 M720 336 Q738 342 752 338 M722 354 Q738 360 752 356 M716 386 Q735 392 752 386" stroke="#1f6f95" stroke-width="5" fill="none" opacity="0.55" filter="url(#blur3)"/><path d="M900 300 Q930 330 950 360 M905 410 Q930 420 955 400" stroke="#1f6f95" stroke-width="7" fill="none" opacity="0.45" filter="url(#blur3)"/><path d="M720 430 Q800 420 880 445 Q920 455 958 440" stroke="#1f6f95" stroke-width="8" fill="none" opacity="0.45" filter="url(#blur6)"/><path d="M950 215 Q958 330 958 455" stroke="#1a6088" stroke-width="12" fill="none" opacity="0.4" filter="url(#blur6)"/><path d="M730 460 Q840 470 950 465" stroke="#1a6088" stroke-width="10" fill="none" opacity="0.4" filter="url(#blur6)"/></g><path d="M750 392 L903 394.5 L894 303.5 L859.6 327 L817.4 300.8 L780.5 327 L747.5 306 Z" fill="url(#crownG)"/><clipPath id="crc"><path d="M750 392 L903 394.5 L894 303.5 L859.6 327 L817.4 300.8 L780.5 327 L747.5 306 Z"/></clipPath><g clip-path="url(#crc)"><rect x="740" y="290" width="170" height="110" fill="#d6d6d6"/><path d="M745 330 Q770 352 800 350 Q840 345 860 352 Q885 358 905 340" stroke="#9c9c9c" stroke-width="10" fill="none" opacity="0.5" filter="url(#blur6)"/><path d="M745 375 Q820 368 905 378" stroke="#e6e6e6" stroke-width="12" fill="none" opacity="0.6" filter="url(#blur6)"/></g><path d="M1056.7 201.7 C1068.5 198.7 1093.5 200.7 1123.0 200.0 C1152.5 199.3 1206.2 197.2 1234.0 197.5 C1261.8 197.8 1278.2 196.8 1290.0 201.7 C1301.8 206.6 1302.2 206.3 1305.0 226.7 C1307.8 247.1 1306.7 289.3 1306.7 324.0 C1306.7 358.7 1306.5 410.5 1305.0 435.0 C1303.5 459.5 1309.8 464.3 1298.0 471.0 C1286.2 477.7 1263.2 474.5 1234.0 475.0 C1204.8 475.5 1152.1 475.6 1123.0 474.0 C1093.9 472.4 1071.4 476.7 1059.4 465.5 C1047.4 454.3 1052.2 439.9 1051.0 407.0 C1049.8 374.1 1052.2 299.5 1052.5 268.0 C1052.8 236.5 1051.8 229.1 1052.5 218.0 C1053.2 206.9 1045.0 204.7 1056.7 201.7 Z" fill="#111111"/><path d="M1063.0 208.0 C1073.6 205.7 1094.5 206.8 1123.0 206.0 C1151.5 205.2 1206.8 203.3 1234.0 203.5 C1261.2 203.7 1275.3 202.8 1286.0 207.0 C1296.7 211.2 1295.8 209.5 1298.0 229.0 C1300.2 248.5 1299.5 290.0 1299.5 324.0 C1299.5 358.0 1299.4 409.8 1298.0 433.0 C1296.6 456.2 1301.7 457.3 1291.0 463.0 C1280.3 468.7 1262.0 466.5 1234.0 467.0 C1206.0 467.5 1151.2 467.3 1123.0 466.0 C1094.8 464.7 1075.8 469.2 1065.0 459.0 C1054.2 448.8 1058.9 436.8 1058.0 405.0 C1057.1 373.2 1059.2 298.8 1059.5 268.0 C1059.8 237.2 1058.9 230.0 1059.5 220.0 C1060.1 210.0 1052.4 210.3 1063.0 208.0 Z" fill="url(#meshP)"/><path d="M1063.0 208.0 C1073.6 205.7 1094.5 206.8 1123.0 206.0 C1151.5 205.2 1206.8 203.3 1234.0 203.5 C1261.2 203.7 1275.3 202.8 1286.0 207.0 C1296.7 211.2 1295.8 209.5 1298.0 229.0 C1300.2 248.5 1299.5 290.0 1299.5 324.0 C1299.5 358.0 1299.4 409.8 1298.0 433.0 C1296.6 456.2 1301.7 457.3 1291.0 463.0 C1280.3 468.7 1262.0 466.5 1234.0 467.0 C1206.0 467.5 1151.2 467.3 1123.0 466.0 C1094.8 464.7 1075.8 469.2 1065.0 459.0 C1054.2 448.8 1058.9 436.8 1058.0 405.0 C1057.1 373.2 1059.2 298.8 1059.5 268.0 C1059.8 237.2 1058.9 230.0 1059.5 220.0 C1060.1 210.0 1052.4 210.3 1063.0 208.0 Z" fill="none" stroke="#0e0c18" stroke-width="12" opacity="0.7" filter="url(#blur3)"/><path d="M1063.0 208.0 C1073.6 205.7 1094.5 206.8 1123.0 206.0 C1151.5 205.2 1206.8 203.3 1234.0 203.5 C1261.2 203.7 1275.3 202.8 1286.0 207.0 C1296.7 211.2 1295.8 209.5 1298.0 229.0 C1300.2 248.5 1299.5 290.0 1299.5 324.0 C1299.5 358.0 1299.4 409.8 1298.0 433.0 C1296.6 456.2 1301.7 457.3 1291.0 463.0 C1280.3 468.7 1262.0 466.5 1234.0 467.0 C1206.0 467.5 1151.2 467.3 1123.0 466.0 C1094.8 464.7 1075.8 469.2 1065.0 459.0 C1054.2 448.8 1058.9 436.8 1058.0 405.0 C1057.1 373.2 1059.2 298.8 1059.5 268.0 C1059.8 237.2 1058.9 230.0 1059.5 220.0 C1060.1 210.0 1052.4 210.3 1063.0 208.0 Z" fill="#1a1530" opacity="0.12"/><path d="M1196 402 Q1214 425 1222 466" stroke="#120f1e" stroke-width="7" fill="none" opacity="0.85" filter="url(#blur3)"/><path d="M1173.3 255.8 L1191 286 L1228.9 280.8 L1224.7 318 L1251 339 L1224.7 362.8 L1226 399 L1190 393 L1172 418 L1154 392 L1112 397.5 L1120.5 364 L1091.4 339 L1119 315.5 L1113.6 280.8 L1156.7 286 Z" fill="url(#meshY)"/><path d="M240.0 491.2 C252.1 490.7 273.4 555.1 290.0 568.4 C306.6 581.7 367.7 586.9 372.8 598.0 C377.9 609.1 336.9 637.2 330.6 657.5 C324.4 677.8 335.3 752.8 322.8 760.6 C310.3 768.4 250.9 720.6 230.6 720.0 C210.3 719.4 169.7 763.0 160.3 756.0 C150.9 749.0 161.8 683.9 155.6 663.8 C149.3 643.6 105.6 606.3 110.3 595.0 C115.0 583.7 176.8 586.0 193.0 573.0 C209.2 560.0 227.9 491.8 240.0 491.2 Z" fill="url(#starG)" filter="url(#inner)"/><path d="M240.0 491.2 C252.1 490.7 273.4 555.1 290.0 568.4 C306.6 581.7 367.7 586.9 372.8 598.0 C377.9 609.1 336.9 637.2 330.6 657.5 C324.4 677.8 335.3 752.8 322.8 760.6 C310.3 768.4 250.9 720.6 230.6 720.0 C210.3 719.4 169.7 763.0 160.3 756.0 C150.9 749.0 161.8 683.9 155.6 663.8 C149.3 643.6 105.6 606.3 110.3 595.0 C115.0 583.7 176.8 586.0 193.0 573.0 C209.2 560.0 227.9 491.8 240.0 491.2 Z" fill="#e6d296" filter="url(#mottle)" opacity="0.22"/><clipPath id="s1c"><path d="M240.0 491.2 C252.1 490.7 273.4 555.1 290.0 568.4 C306.6 581.7 367.7 586.9 372.8 598.0 C377.9 609.1 336.9 637.2 330.6 657.5 C324.4 677.8 335.3 752.8 322.8 760.6 C310.3 768.4 250.9 720.6 230.6 720.0 C210.3 719.4 169.7 763.0 160.3 756.0 C150.9 749.0 161.8 683.9 155.6 663.8 C149.3 643.6 105.6 606.3 110.3 595.0 C115.0 583.7 176.8 586.0 193.0 573.0 C209.2 560.0 227.9 491.8 240.0 491.2 Z"/></clipPath><g clip-path="url(#s1c)"><path d="M170 735 Q200 712 230 706 Q280 716 315 740" stroke="#a08848" stroke-width="7" fill="none" opacity="0.3" filter="url(#blur3)"/></g><path d="M533.8 491.9 C546.6 491.5 549.8 561.5 565.0 576.0 C580.2 590.5 650.5 596.5 655.6 607.5 C660.7 618.5 612.2 643.1 605.6 663.8 C599.0 684.4 614.6 764.0 602.5 773.0 C590.4 782.0 530.2 736.8 508.8 735.6 C487.3 734.4 440.4 770.4 430.6 763.8 C420.8 757.1 436.7 702.8 430.6 682.5 C424.6 662.2 378.3 614.1 382.2 601.2 C386.1 588.4 443.0 593.1 461.9 579.4 C480.8 565.7 520.9 492.3 533.8 491.9 Z" fill="url(#starG)" filter="url(#inner)"/><path d="M533.8 491.9 C546.6 491.5 549.8 561.5 565.0 576.0 C580.2 590.5 650.5 596.5 655.6 607.5 C660.7 618.5 612.2 643.1 605.6 663.8 C599.0 684.4 614.6 764.0 602.5 773.0 C590.4 782.0 530.2 736.8 508.8 735.6 C487.3 734.4 440.4 770.4 430.6 763.8 C420.8 757.1 436.7 702.8 430.6 682.5 C424.6 662.2 378.3 614.1 382.2 601.2 C386.1 588.4 443.0 593.1 461.9 579.4 C480.8 565.7 520.9 492.3 533.8 491.9 Z" fill="#e6d296" filter="url(#mottle)" opacity="0.22"/><clipPath id="s2c"><path d="M533.8 491.9 C546.6 491.5 549.8 561.5 565.0 576.0 C580.2 590.5 650.5 596.5 655.6 607.5 C660.7 618.5 612.2 643.1 605.6 663.8 C599.0 684.4 614.6 764.0 602.5 773.0 C590.4 782.0 530.2 736.8 508.8 735.6 C487.3 734.4 440.4 770.4 430.6 763.8 C420.8 757.1 436.7 702.8 430.6 682.5 C424.6 662.2 378.3 614.1 382.2 601.2 C386.1 588.4 443.0 593.1 461.9 579.4 C480.8 565.7 520.9 492.3 533.8 491.9 Z"/></clipPath><g clip-path="url(#s2c)"><path d="M512 530 Q535 536 556 546" stroke="#8a7438" stroke-width="4" fill="none" opacity="0.55" filter="url(#blur3)"/><path d="M470 578 Q515 570 560 585" stroke="#9a8444" stroke-width="4" fill="none" opacity="0.4" filter="url(#blur3)"/><path d="M600 755 Q590 740 575 730 M480 735 Q500 720 512 705" stroke="#8a7438" stroke-width="4" fill="none" opacity="0.4" filter="url(#blur3)"/></g><path d="M838.3 498.3 C851.6 498.7 851.1 575.0 866.7 590.0 C882.3 605.0 957.5 606.4 963.3 618.3 C969.1 630.2 920.2 663.8 913.3 685.0 C906.4 706.2 920.4 779.1 908.3 788.3 C896.2 797.5 839.4 759.3 816.7 758.3 C794.0 757.3 736.7 789.4 726.7 780.0 C716.7 770.6 743.6 704.1 736.7 683.3 C729.8 662.5 668.8 625.4 671.7 613.3 C674.6 601.2 739.2 601.1 760.0 586.7 C780.8 572.3 825.0 497.9 838.3 498.3 Z" fill="#121212" /><path d="M837.0 510.0 C849.8 510.4 851.9 584.0 866.0 598.0 C880.1 612.0 945.1 611.0 950.0 622.0 C954.9 633.0 911.2 666.6 905.0 686.0 C898.8 705.4 911.1 769.0 900.0 777.0 C888.9 785.0 836.6 751.1 816.0 750.0 C795.4 748.9 744.0 776.4 735.0 768.0 C726.0 759.6 750.5 702.0 744.0 683.0 C737.5 664.0 680.5 627.0 683.0 616.0 C685.5 605.0 744.8 608.2 764.0 595.0 C783.2 581.8 824.2 509.6 837.0 510.0 Z" fill="url(#meshY2)" /><clipPath id="wsc"><path d="M837.0 510.0 C849.8 510.4 851.9 584.0 866.0 598.0 C880.1 612.0 945.1 611.0 950.0 622.0 C954.9 633.0 911.2 666.6 905.0 686.0 C898.8 705.4 911.1 769.0 900.0 777.0 C888.9 785.0 836.6 751.1 816.0 750.0 C795.4 748.9 744.0 776.4 735.0 768.0 C726.0 759.6 750.5 702.0 744.0 683.0 C737.5 664.0 680.5 627.0 683.0 616.0 C685.5 605.0 744.8 608.2 764.0 595.0 C783.2 581.8 824.2 509.6 837.0 510.0 Z"/></clipPath><g clip-path="url(#wsc)"><path d="M758 585 Q780 610 795 632 M868 588 Q852 610 842 634 M915 685 Q890 684 870 692 M817 760 Q817 740 819 722 M735 683 Q755 680 772 686" stroke="#111" stroke-width="9" stroke-linecap="round" fill="none" opacity="0.85" filter="url(#blur3)"/><path d="M795 632 Q810 660 818 690 M842 634 Q830 660 820 690 M870 692 Q845 690 820 695 M819 722 Q820 705 820 695 M772 686 Q795 690 818 695" stroke="#111" stroke-width="4" fill="none" opacity="0.35" filter="url(#blur3)"/></g><path d="M670.5 787 V268" stroke="#3fb877" stroke-width="1.5"/><path d="M655.5 283 L670.5 267.5 L686 283" stroke="#3fb877" stroke-width="1.6" fill="none"/><path d="M671 787 L723 762" stroke="#3166d6" stroke-width="1.6"/><path d="M671 786.5 L1188 813" stroke="#cc3d43" stroke-width="1.5"/><path d="M1169 815.8 L1188.5 813 L1174 809.2" stroke="#cc3d43" stroke-width="1.6" fill="none"/></g><path d="M1406 140 V157.5 H1424" stroke="#2fcf6a" stroke-width="1.3" fill="none"/><path d="M1406 157.5 H1423" stroke="#d94040" stroke-width="1.3"/><path d="M1406 157.5 L1418 154" stroke="#3a7ee6" stroke-width="1.3"/><text x="1402" y="135" font-size="10" fill="#2fcf6a" font-family="Liberation Sans" font-weight="bold">Y</text><text x="1416" y="159" font-size="10" fill="#3a7ee6" font-family="Liberation Sans" font-weight="bold">Z</text><text x="1428" y="162" font-size="10" fill="#e04545" font-family="Liberation Sans" font-weight="bold">X</text></svg>
<div class="ab" style="left:0;top:120px;width:40px;height:933px;background:#2b2b2b"></div>
<div class="ab" style="left:38.5px;top:120px;width:1.5px;height:793px;background:#1c1c1c"></div>
<div class="ab" style="left:0px;top:124px;width:38px;height:75.0px;background:#3c3c3c;border-radius:3px;overflow:hidden">
<div class="ab" style="left:0px;top:0.0px;width:38px;height:37.5px;background:#5558a8"></div>
<svg style="left:0px;top:0.0px" width="38" height="37.5" viewBox="0 0 38 37.5" ><polygon points="19.00,5.50 7.74,12.00 7.74,25.00 19.00,31.50 30.26,25.00 30.26,12.00" fill="none" stroke="#f2f2f2" stroke-width="2.2" stroke-linejoin="round"/><path d="M19 9.5 L27 13.8 V23 L19 27.5 L11 23 V13.8 Z" fill="#c9c9c9"/><path d="M19 18 V27.5 L27 23 V13.8 Z" fill="#8e8e8e"/><path d="M11 13.8 L19 18 L27 13.8 L19 9.5 Z" fill="#d8d8d8"/><path d="M36 30 L36 36 L30 36 Z" fill="#bdbdbd"/></svg>
<div class="ab" style="left:0;top:37.5px;width:38px;height:1px;background:#2e2e2e"></div>
<svg style="left:0px;top:37.5px" width="38" height="37.5" viewBox="0 0 38 37.5" ><polygon points="19.00,7.50 9.47,13.00 9.47,24.00 19.00,29.50 28.53,24.00 28.53,13.00" fill="none" stroke="#4a4a4a" stroke-width="1.6" stroke-linejoin="round"/><path d="M16.5 23.5 L28 12" stroke="#555" stroke-width="3.2" stroke-linecap="round"/><path d="M36 30 L36 36 L30 36 Z" fill="#bdbdbd"/></svg>
</div>
<div class="ab" style="left:0px;top:210px;width:38px;height:152px;background:#3c3c3c;border-radius:3px;overflow:hidden">
<svg style="left:0px;top:0px" width="38" height="38" viewBox="0 0 38 38" ><polygon points="19.00,7.50 9.47,13.00 9.47,24.00 19.00,29.50 28.53,24.00 28.53,13.00" fill="none" stroke="#a0a0a0" stroke-width="1.6" stroke-linejoin="round"/><circle cx="19" cy="17" r="2.6" fill="#f4f4f4"/></svg>
<div class="ab" style="left:0;top:38px;width:38px;height:1px;background:#2e2e2e"></div>
<svg style="left:0px;top:38px" width="38" height="38" viewBox="0 0 38 38" ><path d="M13 26.5 L9.5 24.5 V12.5 L19 7 L28.5 12.5 V24.5 L25 26.5" fill="none" stroke="#a0a0a0" stroke-width="1.6" stroke-linejoin="round"/><path d="M19 15.5 V29" stroke="#f4f4f4" stroke-width="2.2"/></svg>
<div class="ab" style="left:0;top:76px;width:38px;height:1px;background:#2e2e2e"></div>
<svg style="left:0px;top:76px" width="38" height="38" viewBox="0 0 38 38" ><path d="M19 26.5 L9.5 21 V12.5 L19 7 L28.5 12.5" fill="none" stroke="#a0a0a0" stroke-width="1.6" stroke-linejoin="round"/><path d="M19.5 16 L29 11.5 V25 L19.5 30 Z" fill="#f4f4f4"/></svg>
<div class="ab" style="left:0;top:114px;width:38px;height:1px;background:#2e2e2e"></div>
<svg style="left:0px;top:114px" width="38" height="38" viewBox="0 0 38 38" ><path d="M18 7.5 L28 12 V19 L19 24 V30 L9 25 V12.5 Z" fill="#9a9a9a"/><path d="M19 21 L24 18.5 V24 L19 26.5 Z M24 24 L29 21.5 V27 L24 29.5 Z" fill="#f4f4f4"/></svg>
</div>
<div class="ab" style="left:0px;top:374px;width:38px;height:76px;background:#3c3c3c;border-radius:3px;overflow:hidden">
<svg style="left:0px;top:0px" width="38" height="38" viewBox="0 0 38 38" ><path d="M9.5 28.5 V11 M9.5 28.5 H27" stroke="#d0d0d0" stroke-width="1.8" fill="none"/><path d="M9.5 8 L6.9 12 H12.1 Z M30 28.5 L26 25.9 V31.1 Z" fill="#d0d0d0"/></svg>
<div class="ab" style="left:0;top:38px;width:38px;height:1px;background:#2e2e2e"></div>
<svg style="left:0px;top:38px" width="38" height="38" viewBox="0 0 38 38" ><rect x="8" y="8.5" width="11" height="11" fill="#5a5a5a"/><path d="M19 10 H29.5 V28.5 H8.5 V19.5" fill="none" stroke="#4a4a4a" stroke-width="1.4"/></svg>
</div>
<div class="ab" style="left:0px;top:460px;width:38px;height:77.0px;background:#3c3c3c;border-radius:3px;overflow:hidden">
<svg style="left:0px;top:0.0px" width="38" height="38.5" viewBox="0 0 38 38.5" ><path d="M11.5 17.5 V22 A7.5 7.5 0 0 0 26.5 22 V17.5" fill="none" stroke="#c9c9c9" stroke-width="5"/><path d="M9 18 H14 M24 18 H29" stroke="#c9c9c9" stroke-width="3"/><path d="M14 9.5 L21 7.5 L18 11 L25 9.5" stroke="#c9c9c9" stroke-width="1.8" fill="none" stroke-linejoin="round"/><path d="M36 30 L36 36 L30 36 Z" fill="#bdbdbd"/></svg>
<div class="ab" style="left:0;top:38.5px;width:38px;height:1px;background:#2e2e2e"></div>
<svg style="left:0px;top:38.5px" width="38" height="38.5" viewBox="0 0 38 38.5" ><polygon points="19.91,15.06 21.68,15.53 22.07,18.00 23.00,18.93 25.47,19.32 25.94,21.09 24.00,22.66 23.66,23.93 24.55,26.26 23.26,27.55 20.93,26.66 19.66,27.00 18.09,28.94 16.32,28.47 15.93,26.00 15.00,25.07 12.53,24.68 12.06,22.91 14.00,21.34 14.34,20.07 13.45,17.74 14.74,16.45 17.07,17.34 18.34,17.00" fill="#c9c9c9"/><circle cx="19" cy="22" r="2.3" fill="#393939"/><path d="M11 10 L18 8 L15 11.5 L22 10" stroke="#c9c9c9" stroke-width="1.8" fill="none" stroke-linejoin="round"/></svg>
</div>
<div class="ab" style="left:0px;top:548.5px;width:38px;height:74px;background:#3c3c3c;border-radius:3px;overflow:hidden">
<svg style="left:0px;top:0px" width="38" height="37" viewBox="0 0 38 37" ><path d="M8 14 H30 M8 23.5 H30 M13.5 8 V30 M23.5 8 V30" stroke="#d8d8d8" stroke-width="1.8"/></svg>
<div class="ab" style="left:0px;top:37px;width:38px;height:37px;background:#5558a8"></div>
<div class="ab" style="left:0;top:37px;width:38px;height:1px;background:#2e2e2e"></div>
<svg style="left:0px;top:37px" width="38" height="37" viewBox="0 0 38 37" ><path d="M8 13 H30 M8 22 H18 M12.5 7.5 V29 M23.5 7.5 V17" stroke="#d8d8d8" stroke-width="1.8"/><path d="M22.5 21 V18.5 A3.5 3.5 0 0 1 29.5 18.5 V21" fill="none" stroke="#d0d0d0" stroke-width="1.6"/><rect x="20.5" y="21" width="11" height="8" rx="1.3" fill="#d0d0d0"/><path d="M36 30 L36 36 L30 36 Z" fill="#bdbdbd"/></svg>
</div>
<div class="ab" style="left:0px;top:634.5px;width:38px;height:76px;background:#3c3c3c;border-radius:3px;overflow:hidden">
<svg style="left:0px;top:0px" width="38" height="38" viewBox="0 0 38 38" ><circle cx="19" cy="18.5" r="11.5" fill="none" stroke="#505050" stroke-width="1.6"/><circle cx="19" cy="18.5" r="7" fill="none" stroke="#505050" stroke-width="1.6"/><circle cx="19" cy="18.5" r="3.5" fill="#505050"/></svg>
<div class="ab" style="left:0;top:38px;width:38px;height:1px;background:#2e2e2e"></div>
<svg style="left:0px;top:38px" width="38" height="38" viewBox="0 0 38 38" ><circle cx="19" cy="18.5" r="12" fill="none" stroke="#d0d0d0" stroke-width="1.8"/><polygon points="19.85,12.06 21.49,12.49 21.85,14.79 22.71,15.65 25.01,16.01 25.44,17.65 23.64,19.11 23.32,20.29 24.16,22.46 22.96,23.66 20.79,22.82 19.61,23.14 18.15,24.94 16.51,24.51 16.15,22.21 15.29,21.35 12.99,20.99 12.56,19.35 14.36,17.89 14.68,16.71 13.84,14.54 15.04,13.34 17.21,14.18 18.39,13.86" fill="#d0d0d0"/><circle cx="19" cy="18.5" r="2.1" fill="#393939"/></svg>
</div>
<div class="ab" style="left:0px;top:722px;width:38px;height:76px;background:#3c3c3c;border-radius:3px;overflow:hidden">
<svg style="left:0px;top:0px" width="38" height="38" viewBox="0 0 38 38" ><polygon points="19.00,5.50 7.74,12.00 7.74,25.00 19.00,31.50 30.26,25.00 30.26,12.00" fill="#cfcfcf" stroke="none" stroke-width="0" stroke-linejoin="round"/><path d="M11 18.5 Q19 10.5 27 18.5 Q19 26.5 11 18.5 Z" fill="#3a3a3a"/><circle cx="19" cy="18.5" r="3.3" fill="#cfcfcf"/><circle cx="19" cy="18.5" r="1.6" fill="#3a3a3a"/></svg>
<div class="ab" style="left:0;top:38px;width:38px;height:1px;background:#2e2e2e"></div>
<svg style="left:0px;top:38px" width="38" height="38" viewBox="0 0 38 38" ><polygon points="19.00,5.50 7.74,12.00 7.74,25.00 19.00,31.50 30.26,25.00 30.26,12.00" fill="#cfcfcf" stroke="none" stroke-width="0" stroke-linejoin="round"/><text x="19" y="25.5" font-size="17" text-anchor="middle" fill="#333" font-family="Liberation Sans">A</text><path d="M36 30 L36 36 L30 36 Z" fill="#bdbdbd"/></svg>
</div>
<div class="ab" style="left:40px;top:913px;width:1404px;height:140px;background:#2b2b2b"></div>
<div class="ab" style="left:44px;top:917px;width:1398px;height:3px;background-image:radial-gradient(circle,#363636 0.8px,transparent 1px);background-size:3px 3px"></div>
<div class="ab" style="left:42px;top:920px;width:3px;height:120px;background-image:radial-gradient(circle,#363636 0.8px,transparent 1px);background-size:3px 3px"></div>
<div class="ab" style="left:48px;top:924px;width:29px;height:29px;background:#3c3c3c;border-radius:5px;overflow:hidden">
<svg style="left:0px;top:0px" width="29" height="29" viewBox="0 0 29 29" ><path d="M14.5 8 L21 14.5 L14.5 21 L8 14.5 Z" fill="none" stroke="#d6d6d6" stroke-width="2"/></svg>
</div>
<div class="ab" style="left:379.5px;top:924px;width:207.9px;height:28.5px;background:#3c3c3c;border-radius:5px;overflow:hidden">
<svg style="left:0.0px;top:0px" width="29.7" height="28.5" viewBox="0 0 29.7 28.5" ><rect x="7" y="8" width="3" height="13" fill="#c8c8c8"/><path d="M21.5 8 V21 L11 14.5 Z" fill="#c8c8c8"/></svg>
<div class="ab" style="left:29.7px;top:0;width:1px;height:28.5px;background:#2e2e2e"></div>
<svg style="left:29.7px;top:0px" width="29.7" height="28.5" viewBox="0 0 29.7 28.5" ><path d="M8.5 10.9 L12.1 14.5 L8.5 18.1 L4.9 14.5 Z" fill="none" stroke="#c8c8c8" stroke-width="1.4"/><path d="M21 8 V21 L13 14.5 Z" fill="#c8c8c8"/></svg>
<div class="ab" style="left:59.4px;top:0;width:1px;height:28.5px;background:#2e2e2e"></div>
<svg style="left:59.4px;top:0px" width="29.7" height="28.5" viewBox="0 0 29.7 28.5" ><path d="M17 8 V21 L7 14.5 Z" fill="#c8c8c8"/><rect x="18.5" y="8" width="3" height="13" fill="#c8c8c8"/></svg>
<div class="ab" style="left:89.1px;top:0;width:1px;height:28.5px;background:#2e2e2e"></div>
<svg style="left:89.1px;top:0px" width="29.7" height="28.5" viewBox="0 0 29.7 28.5" ><path d="M8 6.5 V22.5 L21.5 14.5 Z" fill="#c8c8c8"/></svg>
<div class="ab" style="left:118.8px;top:0;width:1px;height:28.5px;background:#2e2e2e"></div>
<svg style="left:118.8px;top:0px" width="29.7" height="28.5" viewBox="0 0 29.7 28.5" ><rect x="8" y="8" width="3" height="13" fill="#c8c8c8"/><path d="M12.5 8 V21 L22.5 14.5 Z" fill="#c8c8c8"/></svg>
<div class="ab" style="left:148.5px;top:0;width:1px;height:28.5px;background:#2e2e2e"></div>
<svg style="left:148.5px;top:0px" width="29.7" height="28.5" viewBox="0 0 29.7 28.5" ><path d="M5.5 8 V21 L13.5 14.5 Z" fill="#c8c8c8"/><path d="M20 10.9 L23.6 14.5 L20 18.1 L16.4 14.5 Z" fill="none" stroke="#c8c8c8" stroke-width="1.4"/></svg>
<div class="ab" style="left:178.2px;top:0;width:1px;height:28.5px;background:#2e2e2e"></div>
<svg style="left:178.2px;top:0px" width="29.7" height="28.5" viewBox="0 0 29.7 28.5" ><path d="M7.5 8 V21 L18 14.5 Z" fill="#c8c8c8"/><rect x="19" y="8" width="3" height="13" fill="#c8c8c8"/></svg>
</div>
<div class="ab" style="left:599px;top:924px;width:87.9px;height:28.5px;background:#3c3c3c;border-radius:5px;overflow:hidden">
<div class="ab" style="left:0.0px;top:0px;width:29.3px;height:28.5px;background:#5558a8"></div>
<svg style="left:0.0px;top:0px" width="29.3" height="28.5" viewBox="0 0 29.3 28.5" ><path d="M8 12 V9 H23 M20 6.5 L23.5 9 L20 11.5 M22 16 V19.5 H7 M10 17 L6.5 19.5 L10 22" stroke="#dadada" stroke-width="1.8" fill="none"/><path d="M28 21.5 L28 27.5 L22 27.5 Z" fill="#bdbdbd"/></svg>
<div class="ab" style="left:29.3px;top:0px;width:29.3px;height:28.5px;background:#5558a8"></div>
<div class="ab" style="left:29.3px;top:0;width:1px;height:28.5px;background:#2e2e2e"></div>
<svg style="left:29.3px;top:0px" width="29.3" height="28.5" viewBox="0 0 29.3 28.5" ><text x="15" y="13" font-size="10" text-anchor="middle" fill="#dadada" font-family="Liberation Sans">A</text><path d="M6 16.5 V21 M9.5 16.5 V21 M13 16.5 V21" stroke="#dadada" stroke-width="1.6"/><rect x="16.5" y="17" width="7" height="4" fill="#dadada"/><path d="M28 21.5 L28 27.5 L22 27.5 Z" fill="#bdbdbd"/></svg>
<div class="ab" style="left:58.6px;top:0;width:1px;height:28.5px;background:#2e2e2e"></div>
<svg style="left:58.6px;top:0px" width="29.3" height="28.5" viewBox="0 0 29.3 28.5" ><path d="M6 11 H10 L16 6 V23 L10 18 H6 Z" fill="#cfcfcf"/><path d="M19 8 Q24 14.5 19 21" stroke="#cfcfcf" stroke-width="2" fill="none"/></svg>
</div>
<div class="ab" style="left:699px;top:929px;width:78px;height:19px;background:#1b1b1b;border-radius:3px"></div>
<div class="t" style="left:729px;top:931px;color:#e8e8e8;font-size:12px;letter-spacing:1px">0 F</div>
<div class="ab" style="left:790px;top:924px;width:88.80000000000001px;height:28.5px;background:#3c3c3c;border-radius:5px;overflow:hidden">
<svg style="left:0.0px;top:0px" width="29.6" height="28.5" viewBox="0 0 29.6 28.5" ><circle cx="14.5" cy="14.5" r="9" fill="none" stroke="#6a3030" stroke-width="1.8"/><path d="M14.5 10.0 L19.0 14.5 L14.5 19.0 L10.0 14.5 Z" fill="none" stroke="#6a3030" stroke-width="1.6"/><path d="M28.5 21.5 L28.5 27.5 L22.5 27.5 Z" fill="#9a9a9a"/></svg>
<div class="ab" style="left:29.6px;top:0;width:1px;height:28.5px;background:#2e2e2e"></div>
<svg style="left:29.6px;top:0px" width="29.6" height="28.5" viewBox="0 0 29.6 28.5" ><circle cx="15" cy="14.5" r="9.5" fill="#e84a4a"/><text x="15" y="20" font-size="14" text-anchor="middle" fill="#2a2a2a" font-family="Liberation Sans">A</text></svg>
<div class="ab" style="left:59.2px;top:0;width:1px;height:28.5px;background:#2e2e2e"></div>
<svg style="left:59.2px;top:0px" width="29.6" height="28.5" viewBox="0 0 29.6 28.5" ><circle cx="15" cy="14.5" r="9.5" fill="#cfcfcf"/><polygon points="15.78,8.55 17.30,8.96 17.63,11.07 18.43,11.87 20.54,12.20 20.95,13.72 19.28,15.06 18.99,16.15 19.76,18.15 18.65,19.26 16.65,18.49 15.56,18.78 14.22,20.45 12.70,20.04 12.37,17.93 11.57,17.13 9.46,16.80 9.05,15.28 10.72,13.94 11.01,12.85 10.24,10.85 11.35,9.74 13.35,10.51 14.44,10.22" fill="#333"/><circle cx="15" cy="14.5" r="1.9" fill="#cfcfcf"/></svg>
</div>
<div class="ab" style="left:889.5px;top:924px;width:58.6px;height:28.5px;background:#3c3c3c;border-radius:5px;overflow:hidden">
<svg style="left:0.0px;top:0px" width="29.3" height="28.5" viewBox="0 0 29.3 28.5" ><circle cx="15" cy="14.5" r="9.5" fill="#cfcfcf"/><rect x="11.5" y="8.5" width="7" height="12" rx="3.5" fill="#333"/><path d="M15 9 V12.5" stroke="#cfcfcf" stroke-width="1"/></svg>
<div class="ab" style="left:29.3px;top:0;width:1px;height:28.5px;background:#2e2e2e"></div>
<svg style="left:29.3px;top:0px" width="29.3" height="28.5" viewBox="0 0 29.3 28.5" ><path d="M8.5 20.5 A9 9 0 0 1 13 6.2 M17 6.2 A9 9 0 0 1 21.5 20.5" stroke="#b5b5b5" stroke-width="1.8" fill="none"/><path d="M13 12.5 L16.5 16 L13 19.5 L9.5 16 Z" fill="none" stroke="#b5b5b5" stroke-width="1.6"/><path d="M15.5 13.5 L20 7.5" stroke="#b5b5b5" stroke-width="1.6"/></svg>
</div>
<div class="ab" style="left:960px;top:924px;width:147.0px;height:28.5px;background:#3c3c3c;border-radius:5px;overflow:hidden">
<svg style="left:0.0px;top:0px" width="29.4" height="28.5" viewBox="0 0 29.4 28.5" ><path d="M15 10.5 L19 14.5 L15 18.5 L11 14.5 Z" fill="none" stroke="#c8c8c8" stroke-width="1.4"/><path d="M15 5 L12.5 8 H17.5 Z M15 24 L12.5 21 H17.5 Z M5.5 14.5 L8.5 12 V17 Z M24.5 14.5 L21.5 12 V17 Z" fill="#c8c8c8"/></svg>
<div class="ab" style="left:29.4px;top:0;width:1px;height:28.5px;background:#2e2e2e"></div>
<svg style="left:29.4px;top:0px" width="29.4" height="28.5" viewBox="0 0 29.4 28.5" ><path d="M15 10.7 L18.8 14.5 L15 18.3 L11.2 14.5 Z" fill="none" stroke="#c8c8c8" stroke-width="1.4"/><path d="M9 21 A9 9 0 0 1 11 6.5 M21 8 A9 9 0 0 1 19 22.5" stroke="#c8c8c8" stroke-width="1.8" fill="none"/><path d="M7 19 L9 22.5 L12 20.5 M23 10 L21 6.5 L18 8.5" stroke="#c8c8c8" stroke-width="1.4" fill="none"/></svg>
<div class="ab" style="left:58.8px;top:0;width:1px;height:28.5px;background:#2e2e2e"></div>
<svg style="left:58.8px;top:0px" width="29.4" height="28.5" viewBox="0 0 29.4 28.5" ><path d="M9 11 V6.5 H23.5 V22 H18" stroke="#c8c8c8" stroke-width="1.8" fill="none"/><path d="M12 13.8 L16.2 18 L12 22.2 L7.8 18 Z" fill="none" stroke="#c8c8c8" stroke-width="1.4"/><path d="M15.5 11.5 H19 V15" stroke="#c8c8c8" stroke-width="1.5" fill="none"/></svg>
<div class="ab" style="left:88.19999999999999px;top:0;width:1px;height:28.5px;background:#2e2e2e"></div>
<svg style="left:88.19999999999999px;top:0px" width="29.4" height="28.5" viewBox="0 0 29.4 28.5" ><rect x="6" y="8" width="18" height="5.5" rx="2.75" fill="#d0d0d0"/><rect x="6" y="16" width="18" height="5.5" rx="2.75" fill="#d0d0d0"/><circle cx="9" cy="10.75" r="1.6" fill="#333"/><circle cx="21" cy="18.75" r="1.6" fill="#333"/></svg>
<div class="ab" style="left:117.6px;top:0px;width:29.4px;height:28.5px;background:#5558a8"></div>
<div class="ab" style="left:117.6px;top:0;width:1px;height:28.5px;background:#2e2e2e"></div>
<svg style="left:117.6px;top:0px" width="29.4" height="28.5" viewBox="0 0 29.4 28.5" ><path d="M8 6 L23 23" stroke="#dcdcdc" stroke-width="1.8"/><circle cx="19" cy="9.5" r="2.8" fill="#dcdcdc"/><circle cx="10.5" cy="19" r="2.8" fill="#dcdcdc"/><path d="M17 17 L21 21" stroke="#dcdcdc" stroke-width="3"/></svg>
</div>
<div class="ab" style="left:1411px;top:925px;width:28px;height:28px;background:#3c3c3c;border-radius:5px;overflow:hidden">
<div class="ab" style="left:0px;top:0px;width:28px;height:28px;background:#5558a8"></div>
<svg style="left:0px;top:0px" width="28" height="28" viewBox="0 0 28 28" ><path d="M7 7.5 V21 H21 M7 21 L20 8 M16 8 H20.5 V12.5 M5 10 L7 7 L9 10 M18 19 L21 21 L18 23" stroke="#d8d8d8" stroke-width="1.6" fill="none"/></svg>
</div>
<div class="ab" style="left:55.1px;top:975px;width:1.2px;height:5px;background:#a8a8a8"></div>
<div class="ab" style="left:70.6px;top:976px;width:1.2px;height:2px;background:#9a9a9a"></div>
<div class="ab" style="left:86.1px;top:976px;width:1.2px;height:2px;background:#9a9a9a"></div>
<div class="ab" style="left:101.6px;top:976px;width:1.2px;height:2px;background:#9a9a9a"></div>
<div class="ab" style="left:117.1px;top:976px;width:1.2px;height:2px;background:#9a9a9a"></div>
<div class="ab" style="left:132.6px;top:975px;width:1.2px;height:5px;background:#a8a8a8"></div>
<div class="t" style="left:121.1px;top:956px;width:24px;text-align:center;color:#c0c0c0;letter-spacing:0">5</div>
<div class="ab" style="left:148.1px;top:976px;width:1.2px;height:2px;background:#9a9a9a"></div>
<div class="ab" style="left:163.6px;top:976px;width:1.2px;height:2px;background:#9a9a9a"></div>
<div class="ab" style="left:179.1px;top:976px;width:1.2px;height:2px;background:#9a9a9a"></div>
<div class="ab" style="left:194.6px;top:976px;width:1.2px;height:2px;background:#9a9a9a"></div>
<div class="ab" style="left:210.1px;top:975px;width:1.2px;height:5px;background:#a8a8a8"></div>
<div class="t" style="left:198.6px;top:956px;width:24px;text-align:center;color:#c0c0c0;letter-spacing:0">10</div>
<div class="ab" style="left:225.6px;top:976px;width:1.2px;height:2px;background:#9a9a9a"></div>
<div class="ab" style="left:241.1px;top:976px;width:1.2px;height:2px;background:#9a9a9a"></div>
<div class="ab" style="left:256.6px;top:976px;width:1.2px;height:2px;background:#9a9a9a"></div>
<div class="ab" style="left:272.1px;top:976px;width:1.2px;height:2px;background:#9a9a9a"></div>
<div class="ab" style="left:287.6px;top:975px;width:1.2px;height:5px;background:#a8a8a8"></div>
<div class="t" style="left:276.1px;top:956px;width:24px;text-align:center;color:#c0c0c0;letter-spacing:0">15</div>
<div class="ab" style="left:303.1px;top:976px;width:1.2px;height:2px;background:#9a9a9a"></div>
<div class="ab" style="left:318.6px;top:976px;width:1.2px;height:2px;background:#9a9a9a"></div>
<div class="ab" style="left:334.1px;top:976px;width:1.2px;height:2px;background:#9a9a9a"></div>
<div class="ab" style="left:349.6px;top:976px;width:1.2px;height:2px;background:#9a9a9a"></div>
<div class="ab" style="left:365.1px;top:975px;width:1.2px;height:5px;background:#a8a8a8"></div>
<div class="t" style="left:353.6px;top:956px;width:24px;text-align:center;color:#c0c0c0;letter-spacing:0">20</div>
<div class="ab" style="left:380.6px;top:976px;width:1.2px;height:2px;background:#9a9a9a"></div>
<div class="ab" style="left:396.1px;top:976px;width:1.2px;height:2px;background:#9a9a9a"></div>
<div class="ab" style="left:411.6px;top:976px;width:1.2px;height:2px;background:#9a9a9a"></div>
<div class="ab" style="left:427.1px;top:976px;width:1.2px;height:2px;background:#9a9a9a"></div>
<div class="ab" style="left:442.6px;top:975px;width:1.2px;height:5px;background:#a8a8a8"></div>
<div class="t" style="left:431.1px;top:956px;width:24px;text-align:center;color:#c0c0c0;letter-spacing:0">25</div>
<div class="ab" style="left:458.1px;top:976px;width:1.2px;height:2px;background:#9a9a9a"></div>
<div class="ab" style="left:473.6px;top:976px;width:1.2px;height:2px;background:#9a9a9a"></div>
<div class="ab" style="left:489.1px;top:976px;width:1.2px;height:2px;background:#9a9a9a"></div>
<div class="ab" style="left:504.6px;top:976px;width:1.2px;height:2px;background:#9a9a9a"></div>
<div class="ab" style="left:520.1px;top:975px;width:1.2px;height:5px;background:#a8a8a8"></div>
<div class="t" style="left:508.6px;top:956px;width:24px;text-align:center;color:#c0c0c0;letter-spacing:0">30</div>
<div class="ab" style="left:535.6px;top:976px;width:1.2px;height:2px;background:#9a9a9a"></div>
<div class="ab" style="left:551.1px;top:976px;width:1.2px;height:2px;background:#9a9a9a"></div>
<div class="ab" style="left:566.6px;top:976px;width:1.2px;height:2px;background:#9a9a9a"></div>
<div class="ab" style="left:582.1px;top:976px;width:1.2px;height:2px;background:#9a9a9a"></div>
<div class="ab" style="left:597.6px;top:975px;width:1.2px;height:5px;background:#a8a8a8"></div>
<div class="t" style="left:586.1px;top:956px;width:24px;text-align:center;color:#c0c0c0;letter-spacing:0">35</div>
<div class="ab" style="left:613.1px;top:976px;width:1.2px;height:2px;background:#9a9a9a"></div>
<div class="ab" style="left:628.6px;top:976px;width:1.2px;height:2px;background:#9a9a9a"></div>
<div class="ab" style="left:644.1px;top:976px;width:1.2px;height:2px;background:#9a9a9a"></div>
<div class="ab" style="left:659.6px;top:976px;width:1.2px;height:2px;background:#9a9a9a"></div>
<div class="ab" style="left:675.1px;top:975px;width:1.2px;height:5px;background:#a8a8a8"></div>
<div class="t" style="left:663.6px;top:956px;width:24px;text-align:center;color:#c0c0c0;letter-spacing:0">40</div>
<div class="ab" style="left:690.6px;top:976px;width:1.2px;height:2px;background:#9a9a9a"></div>
<div class="ab" style="left:706.1px;top:976px;width:1.2px;height:2px;background:#9a9a9a"></div>
<div class="ab" style="left:721.6px;top:976px;width:1.2px;height:2px;background:#9a9a9a"></div>
<div class="ab" style="left:737.1px;top:976px;width:1.2px;height:2px;background:#9a9a9a"></div>
<div class="ab" style="left:752.6px;top:975px;width:1.2px;height:5px;background:#a8a8a8"></div>
<div class="t" style="left:741.1px;top:956px;width:24px;text-align:center;color:#c0c0c0;letter-spacing:0">45</div>
<div class="ab" style="left:768.1px;top:976px;width:1.2px;height:2px;background:#9a9a9a"></div>
<div class="ab" style="left:783.6px;top:976px;width:1.2px;height:2px;background:#9a9a9a"></div>
<div class="ab" style="left:799.1px;top:976px;width:1.2px;height:2px;background:#9a9a9a"></div>
<div class="ab" style="left:814.6px;top:976px;width:1.2px;height:2px;background:#9a9a9a"></div>
<div class="ab" style="left:830.1px;top:975px;width:1.2px;height:5px;background:#a8a8a8"></div>
<div class="t" style="left:818.6px;top:956px;width:24px;text-align:center;color:#c0c0c0;letter-spacing:0">50</div>
<div class="ab" style="left:845.6px;top:976px;width:1.2px;height:2px;background:#9a9a9a"></div>
<div class="ab" style="left:861.1px;top:976px;width:1.2px;height:2px;background:#9a9a9a"></div>
<div class="ab" style="left:876.6px;top:976px;width:1.2px;height:2px;background:#9a9a9a"></div>
<div class="ab" style="left:892.1px;top:976px;width:1.2px;height:2px;background:#9a9a9a"></div>
<div class="ab" style="left:907.6px;top:975px;width:1.2px;height:5px;background:#a8a8a8"></div>
<div class="t" style="left:896.1px;top:956px;width:24px;text-align:center;color:#c0c0c0;letter-spacing:0">55</div>
<div class="ab" style="left:923.1px;top:976px;width:1.2px;height:2px;background:#9a9a9a"></div>
<div class="ab" style="left:938.6px;top:976px;width:1.2px;height:2px;background:#9a9a9a"></div>
<div class="ab" style="left:954.1px;top:976px;width:1.2px;height:2px;background:#9a9a9a"></div>
<div class="ab" style="left:969.6px;top:976px;width:1.2px;height:2px;background:#9a9a9a"></div>
<div class="ab" style="left:985.1px;top:975px;width:1.2px;height:5px;background:#a8a8a8"></div>
<div class="t" style="left:973.6px;top:956px;width:24px;text-align:center;color:#c0c0c0;letter-spacing:0">60</div>
<div class="ab" style="left:1000.6px;top:976px;width:1.2px;height:2px;background:#9a9a9a"></div>
<div class="ab" style="left:1016.1px;top:976px;width:1.2px;height:2px;background:#9a9a9a"></div>
<div class="ab" style="left:1031.6px;top:976px;width:1.2px;height:2px;background:#9a9a9a"></div>
<div class="ab" style="left:1047.1px;top:976px;width:1.2px;height:2px;background:#9a9a9a"></div>
<div class="ab" style="left:1062.6px;top:975px;width:1.2px;height:5px;background:#a8a8a8"></div>
<div class="t" style="left:1051.1px;top:956px;width:24px;text-align:center;color:#c0c0c0;letter-spacing:0">65</div>
<div class="ab" style="left:1078.1px;top:976px;width:1.2px;height:2px;background:#9a9a9a"></div>
<div class="ab" style="left:1093.6px;top:976px;width:1.2px;height:2px;background:#9a9a9a"></div>
<div class="ab" style="left:1109.1px;top:976px;width:1.2px;height:2px;background:#9a9a9a"></div>
<div class="ab" style="left:1124.6px;top:976px;width:1.2px;height:2px;background:#9a9a9a"></div>
<div class="ab" style="left:1140.1px;top:975px;width:1.2px;height:5px;background:#a8a8a8"></div>
<div class="t" style="left:1128.6px;top:956px;width:24px;text-align:center;color:#c0c0c0;letter-spacing:0">70</div>
<div class="ab" style="left:1155.6px;top:976px;width:1.2px;height:2px;background:#9a9a9a"></div>
<div class="ab" style="left:1171.1px;top:976px;width:1.2px;height:2px;background:#9a9a9a"></div>
<div class="ab" style="left:1186.6px;top:976px;width:1.2px;height:2px;background:#9a9a9a"></div>
<div class="ab" style="left:1202.1px;top:976px;width:1.2px;height:2px;background:#9a9a9a"></div>
<div class="ab" style="left:1217.6px;top:975px;width:1.2px;height:5px;background:#a8a8a8"></div>
<div class="t" style="left:1206.1px;top:956px;width:24px;text-align:center;color:#c0c0c0;letter-spacing:0">75</div>
<div class="ab" style="left:1233.1px;top:976px;width:1.2px;height:2px;background:#9a9a9a"></div>
<div class="ab" style="left:1248.6px;top:976px;width:1.2px;height:2px;background:#9a9a9a"></div>
<div class="ab" style="left:1264.1px;top:976px;width:1.2px;height:2px;background:#9a9a9a"></div>
<div class="ab" style="left:1279.6px;top:976px;width:1.2px;height:2px;background:#9a9a9a"></div>
<div class="ab" style="left:1295.1px;top:975px;width:1.2px;height:5px;background:#a8a8a8"></div>
<div class="t" style="left:1283.6px;top:956px;width:24px;text-align:center;color:#c0c0c0;letter-spacing:0">80</div>
<div class="ab" style="left:1310.6px;top:976px;width:1.2px;height:2px;background:#9a9a9a"></div>
<div class="ab" style="left:1326.1px;top:976px;width:1.2px;height:2px;background:#9a9a9a"></div>
<div class="ab" style="left:1341.6px;top:976px;width:1.2px;height:2px;background:#9a9a9a"></div>
<div class="ab" style="left:1357.1px;top:976px;width:1.2px;height:2px;background:#9a9a9a"></div>
<div class="ab" style="left:1372.6px;top:975px;width:1.2px;height:5px;background:#a8a8a8"></div>
<div class="t" style="left:1361.1px;top:956px;width:24px;text-align:center;color:#c0c0c0;letter-spacing:0">85</div>
<div class="ab" style="left:1388.1px;top:976px;width:1.2px;height:2px;background:#9a9a9a"></div>
<div class="ab" style="left:1403.6px;top:976px;width:1.2px;height:2px;background:#9a9a9a"></div>
<div class="ab" style="left:1419.1px;top:976px;width:1.2px;height:2px;background:#9a9a9a"></div>
<div class="ab" style="left:1434.6px;top:976px;width:1.2px;height:2px;background:#9a9a9a"></div>
<div class="ab" style="left:48px;top:972px;width:1392px;height:1px;background:#363636"></div>
<div class="ab" style="left:51px;top:956px;width:10px;height:16px;background:#7b7bd6"></div>
<div class="ab" style="left:55px;top:972px;width:1px;height:9px;background:#bbbbbb"></div>
<div class="t" style="left:62px;top:956px;color:#8a8ae0;letter-spacing:0">0</div>
<div class="ab" style="left:520.1px;top:957px;width:1px;height:24px;background:#8a8a8a"></div>
<div class="ab" style="left:985.1px;top:957px;width:1px;height:24px;background:#8a8a8a"></div>
<div class="ab" style="left:49px;top:983px;width:78px;height:18px;background:#1b1b1b;border-radius:3px"></div>
<div class="t" style="left:80px;top:985px;color:#e8e8e8;letter-spacing:1px">0 F</div>
<div class="ab" style="left:136px;top:983px;width:1207px;height:17px;background:#3b3b3b;border-radius:2px"></div>
<div class="ab" style="left:139px;top:984px;width:6px;height:15px;background:repeating-linear-gradient(90deg,#333 0 1px,#3b3b3b 1px 2px)"></div>
<div class="ab" style="left:1333px;top:984px;width:7px;height:15px;background:repeating-linear-gradient(90deg,#333 0 1px,#3b3b3b 1px 2px)"></div>
<div class="t" style="left:152px;top:985px;color:#dcdcdc;letter-spacing:1px">0 F</div>
<div class="t" style="left:1302px;top:985px;color:#dcdcdc;letter-spacing:0">89 F</div>
<div class="ab" style="left:1365px;top:983px;width:77px;height:18px;background:#1b1b1b;border-radius:3px"></div>
<div class="t" style="left:1392px;top:985px;color:#e8e8e8;letter-spacing:0">90 F</div>
<div class="ab" style="left:0;top:1051px;width:1920px;height:4px;background:#2f2f2f"></div>
<div class="ab" style="left:0;top:1055px;width:1920px;height:25px;background:#1d1d1d"></div>
<svg style="left:5px;top:1061px" width="16" height="14" viewBox="0 0 16 14" ><path d="M1 2 H15 M1 7 H15 M1 12 H15" stroke="#aaaaaa" stroke-width="1.8"/></svg>
<svg style="left:30px;top:1060px" width="16" height="16" viewBox="0 0 16 16" ><circle cx="8" cy="8" r="6.5" fill="none" stroke="#aaaaaa" stroke-width="1.6"/><path d="M4.5 8 L7.2 10.7 L13.5 4" stroke="#aaaaaa" stroke-width="1.7" fill="none"/></svg>
<div class="ab" style="left:1443px;top:57px;width:43px;height:996px;background:#2b2b2b"></div>
<div class="ab" style="left:1443px;top:57px;width:2px;height:996px;background:#232323"></div>
<div class="ab" style="left:1483px;top:57px;width:2px;height:996px;background:#232323"></div>
<div class="ab" style="left:1449px;top:60px;width:32px;height:3px;background-image:radial-gradient(circle,#3a3a3a 0.8px,transparent 1px);background-size:3px 3px"></div>
<div class="ab" style="left:1445.5px;top:65px;width:37.5px;height:420.20000000000005px;background:#3a3a3a;border-radius:5px;overflow:hidden">
<svg style="left:0px;top:0.0px" width="37.5" height="38.2" viewBox="0 0 37.5 38.2" ><circle cx="19" cy="19" r="11.5" fill="#5a5a5a"/><path d="M19 19 L28 8 Q27 15 21 21 Z" fill="#8a6a42"/><path d="M19 19 L26 10" stroke="#3a4a5a" stroke-width="1"/></svg>
<div class="ab" style="left:0;top:38.2px;width:37.5px;height:1px;background:#2e2e2e"></div>
<svg style="left:0px;top:38.2px" width="37.5" height="38.2" viewBox="0 0 37.5 38.2" ><circle cx="19" cy="19" r="11.5" fill="#5a5a5a"/><path d="M21 8 Q23 17 30 20 A11.5 11.5 0 0 0 30 8 Z" fill="#7a7a7a"/><path d="M21 8 Q23 17 30 20" stroke="#333" stroke-width="1.2" fill="none"/></svg>
<div class="ab" style="left:0;top:76.4px;width:37.5px;height:1px;background:#2e2e2e"></div>
<svg style="left:0px;top:76.4px" width="37.5" height="38.2" viewBox="0 0 37.5 38.2" ><circle cx="19" cy="19" r="11.5" fill="#5a5a5a"/><path d="M13 9 Q14 22 29 27 A11.5 11.5 0 0 0 13 9 Z" fill="#6a6a6a"/><path d="M13 9 Q14 22 29 27" stroke="#333" stroke-width="1.3" fill="none"/></svg>
<div class="ab" style="left:0;top:114.60000000000001px;width:37.5px;height:1px;background:#2e2e2e"></div>
<svg style="left:0px;top:114.60000000000001px" width="37.5" height="38.2" viewBox="0 0 37.5 38.2" ><circle cx="19" cy="19" r="11.5" fill="#5a5a5a"/><path d="M11 10 A11.5 11.5 0 0 1 30 24 L27 25 Q25 13 12 14 Z" fill="#8a6a42"/></svg>
<div class="ab" style="left:0;top:152.8px;width:37.5px;height:1px;background:#2e2e2e"></div>
<svg style="left:0px;top:152.8px" width="37.5" height="38.2" viewBox="0 0 37.5 38.2" ><circle cx="19" cy="19" r="11.5" fill="#5a5a5a"/><path d="M19 19 L27 9 L30 14 Z" fill="#8a6a42"/><path d="M19 19 L27 9" stroke="#333" stroke-width="1"/></svg>
<div class="ab" style="left:0;top:191.0px;width:37.5px;height:1px;background:#2e2e2e"></div>
<svg style="left:0px;top:191.0px" width="37.5" height="38.2" viewBox="0 0 37.5 38.2" ><circle cx="19" cy="19" r="11.5" fill="#5a5a5a"/><path d="M20 18 L26 9 L30 14 Z" fill="#7a7a7a"/></svg>
<div class="ab" style="left:0;top:229.20000000000002px;width:37.5px;height:1px;background:#2e2e2e"></div>
<svg style="left:0px;top:229.20000000000002px" width="37.5" height="38.2" viewBox="0 0 37.5 38.2" ><circle cx="19" cy="19" r="11.5" fill="#5a5a5a"/><path d="M22 9 Q30 10 31 16 L24 18 Z" fill="#8a6a42"/></svg>
<div class="ab" style="left:0;top:267.40000000000003px;width:37.5px;height:1px;background:#2e2e2e"></div>
<svg style="left:0px;top:267.40000000000003px" width="37.5" height="38.2" viewBox="0 0 37.5 38.2" ><circle cx="19" cy="19" r="11.5" fill="#5a5a5a"/><path d="M21 9 Q21 16 30 17 A11.5 11.5 0 0 0 21 9 Z" fill="#7a7a7a"/><path d="M21 9 Q21 16 30 17" stroke="#333" stroke-width="1.2" fill="none"/></svg>
<div class="ab" style="left:0;top:305.6px;width:37.5px;height:1px;background:#2e2e2e"></div>
<svg style="left:0px;top:305.6px" width="37.5" height="38.2" viewBox="0 0 37.5 38.2" ><circle cx="19" cy="19" r="11.5" fill="#5a5a5a"/><path d="M20 10 L27 5 L31 16 Z" fill="#8a6a42"/></svg>
<div class="ab" style="left:0;top:343.8px;width:37.5px;height:1px;background:#2e2e2e"></div>
<svg style="left:0px;top:343.8px" width="37.5" height="38.2" viewBox="0 0 37.5 38.2" ><circle cx="19" cy="19" r="11.5" fill="#5a5a5a"/><path d="M18 19 L25 8 L31 17 Z" fill="#7a7a7a"/><path d="M18 19 L25 9" stroke="#333" stroke-width="1"/></svg>
<div class="ab" style="left:0;top:382.0px;width:37.5px;height:1px;background:#2e2e2e"></div>
<svg style="left:0px;top:382.0px" width="37.5" height="38.2" viewBox="0 0 37.5 38.2" ><circle cx="19" cy="19" r="11.5" fill="#5a5a5a"/><path d="M20 11 Q23 18 31 16 L32 8 Z" fill="#7a7a7a"/><path d="M20 11 Q23 18 31 16" stroke="#333" stroke-width="1.2" fill="none"/></svg>
</div>
<svg style="left:0;top:0" width="0" height="0"><defs><radialGradient id="sphG" cx="0.38" cy="0.32" r="0.7"><stop offset="0" stop-color="#fff" stop-opacity="0.35"/><stop offset="0.5" stop-color="#fff" stop-opacity="0"/><stop offset="1" stop-color="#000" stop-opacity="0.35"/></radialGradient></defs></svg>
<div class="ab" style="left:1486px;top:57px;width:434px;height:996px;background:#2b2b2b"></div>
<div class="ab" style="left:1486px;top:57px;width:434px;height:1px;background:#212121"></div>
<svg style="left:1491px;top:64px" width="16" height="12" viewBox="0 0 16 12" ><path d="M0.5 1 H15.5 M0.5 5.5 H15.5 M0.5 10 H15.5" stroke="#bdbdbd" stroke-width="1.9"/></svg>
<div class="t" style="left:1517px;top:63px">File</div>
<div class="t" style="left:1550px;top:63px">Edit</div>
<div class="t" style="left:1585px;top:63px">View</div>
<div class="t" style="left:1625px;top:63px">Object</div>
<div class="t" style="left:1675px;top:63px">Tags</div>
<div class="t" style="left:1713px;top:63px">Bookmarks</div>
<div class="ab" style="left:1486px;top:83.5px;width:434px;height:21.33px;background:#262626"></div>
<div class="ab" style="left:1486px;top:104.8px;width:434px;height:21.33px;background:#2b2b2b"></div>
<div class="ab" style="left:1486px;top:126.2px;width:434px;height:21.33px;background:#262626"></div>
<div class="ab" style="left:1486px;top:147.5px;width:434px;height:21.33px;background:#2b2b2b"></div>
<div class="ab" style="left:1486px;top:168.8px;width:434px;height:21.33px;background:#262626"></div>
<div class="ab" style="left:1486px;top:190.1px;width:434px;height:21.33px;background:#2b2b2b"></div>
<div class="ab" style="left:1486px;top:211.5px;width:434px;height:21.33px;background:#262626"></div>
<div class="ab" style="left:1486px;top:232.8px;width:434px;height:21.33px;background:#2b2b2b"></div>
<div class="ab" style="left:1486px;top:254.1px;width:434px;height:21.33px;background:#262626"></div>
<div class="ab" style="left:1486px;top:275.5px;width:434px;height:21.33px;background:#2b2b2b"></div>
<div class="ab" style="left:1486px;top:296.8px;width:434px;height:21.33px;background:#262626"></div>
<div class="ab" style="left:1486px;top:318.1px;width:434px;height:21.33px;background:#2b2b2b"></div>
<div class="ab" style="left:1486px;top:339.5px;width:434px;height:21.33px;background:#262626"></div>
<div class="ab" style="left:1494px;top:88px;width:1px;height:262px;background:#5a5a5a"></div>
<div class="ab" style="left:1494px;top:93.7px;width:9px;height:1px;background:#5a5a5a"></div>
<svg style="left:1503px;top:86.16499999999999px" width="16" height="16" viewBox="0 0 16 16" ><path d="M8 3 L13.3 12.7 H2.7 Z" fill="#7ed2f5"/><circle cx="8" cy="2.5" r="1.8" fill="#f0f0f0"/><circle cx="2.3" cy="13" r="1.8" fill="#f0f0f0"/><circle cx="13.7" cy="13" r="1.8" fill="#f0f0f0"/></svg>
<div class="t" style="left:1524px;top:87.5px;font-size:11.5px;letter-spacing:-0.35px">Bit Plush</div>
<svg style="left:1620px;top:89.0px" width="11" height="11" viewBox="0 0 11 11" ><rect x="0" y="0" width="11" height="11" rx="1.5" fill="#4a4a4a"/><path d="M3 8 L8 3" stroke="#2a2a2a" stroke-width="1.6"/></svg>
<svg style="left:1637.5px;top:85.5px" width="6" height="17" viewBox="0 0 6 17" ><circle cx="3" cy="3" r="2.8" fill="#4a4a4a"/><circle cx="3" cy="13" r="2.8" fill="#4a4a4a"/></svg>
<svg style="left:1670px;top:86.5px" width="16" height="15" viewBox="0 0 16 15" ><rect x="0.5" y="0.5" width="15" height="14" rx="2" fill="#cfcfcf"/><path d="M2.5 7.5 Q8 2 13.5 7.5 Q8 13 2.5 7.5 Z" fill="#2a2a2a"/><circle cx="8" cy="7.5" r="2.2" fill="#cfcfcf"/><circle cx="8" cy="7.5" r="1" fill="#2a2a2a"/></svg>
<svg style="left:1693px;top:86.5px" width="15" height="15" viewBox="0 0 15 15" ><rect x="0.5" y="0.5" width="14" height="14" fill="#cfcfcf"/><rect x="2.5" y="2.5" width="5" height="5" fill="#1e1e1e"/><rect x="7.5" y="7.5" width="5" height="5" fill="#1e1e1e"/></svg>
<svg style="left:1713px;top:86.5px" width="15" height="16" viewBox="0 0 15 16" ><path d="M1.5 15.5 V1.5 H14" stroke="#8a86ee" stroke-width="1.8" fill="none"/><path d="M4 4 H11 Q10.5 10 4 11 Z" fill="#cfcfcf"/></svg>
<svg style="left:1734px;top:84.3px" width="20" height="20" viewBox="0 0 20 20" ><rect x="0" y="0" width="20" height="20" fill="#777"/><rect x="0.5" y="0.5" width="19" height="19" fill="none" stroke="#555" stroke-width="1"/><circle cx="10" cy="10" r="8.5" fill="#4a3d9e"/><circle cx="4.5" cy="14" r="2.4" fill="#c8b050" opacity="0.75"/><circle cx="15.5" cy="14" r="2.4" fill="#c8b050" opacity="0.75"/><circle cx="10" cy="10" r="8.5" fill="url(#sphG)"/></svg>
<div class="ab" style="left:1494px;top:115.0px;width:9px;height:1px;background:#5a5a5a"></div>
<svg style="left:1503px;top:107.495px" width="16" height="16" viewBox="0 0 16 16" ><path d="M8 3 L13.3 12.7 H2.7 Z" fill="#7ed2f5"/><circle cx="8" cy="2.5" r="1.8" fill="#f0f0f0"/><circle cx="2.3" cy="13" r="1.8" fill="#f0f0f0"/><circle cx="13.7" cy="13" r="1.8" fill="#f0f0f0"/></svg>
<div class="t" style="left:1524px;top:108.8px;font-size:11.5px;letter-spacing:-0.35px">Crown Plush</div>
<svg style="left:1620px;top:110.33px" width="11" height="11" viewBox="0 0 11 11" ><rect x="0" y="0" width="11" height="11" rx="1.5" fill="#4a4a4a"/><path d="M3 8 L8 3" stroke="#2a2a2a" stroke-width="1.6"/></svg>
<svg style="left:1637.5px;top:106.83px" width="6" height="17" viewBox="0 0 6 17" ><circle cx="3" cy="3" r="2.8" fill="#4a4a4a"/><circle cx="3" cy="13" r="2.8" fill="#4a4a4a"/></svg>
<svg style="left:1671px;top:107.83px" width="15" height="15" viewBox="0 0 15 15" ><rect x="0.5" y="0.5" width="14" height="14" fill="#cfcfcf"/><rect x="2.5" y="2.5" width="5" height="5" fill="#1e1e1e"/><rect x="7.5" y="7.5" width="5" height="5" fill="#1e1e1e"/></svg>
<svg style="left:1691px;top:107.83px" width="15" height="16" viewBox="0 0 15 16" ><path d="M1.5 15.5 V1.5 H14" stroke="#8a86ee" stroke-width="1.8" fill="none"/><path d="M4 4 H11 Q10.5 10 4 11 Z" fill="#cfcfcf"/></svg>
<svg style="left:1712px;top:105.63px" width="20" height="20" viewBox="0 0 20 20" ><rect x="0" y="0" width="20" height="20" fill="#777"/><rect x="0.5" y="0.5" width="19" height="19" fill="none" stroke="#555" stroke-width="1"/><circle cx="10" cy="10" r="8.5" fill="#3aaed8"/><circle cx="4.5" cy="14" r="2.4" fill="#e8e8e8" opacity="0.75"/><circle cx="15.5" cy="14" r="2.4" fill="#e8e8e8" opacity="0.75"/><circle cx="10" cy="10" r="8.5" fill="url(#sphG)"/></svg>
<div class="ab" style="left:1494px;top:136.3px;width:9px;height:1px;background:#5a5a5a"></div>
<svg style="left:1503px;top:128.825px" width="16" height="16" viewBox="0 0 16 16" ><path d="M8 3 L13.3 12.7 H2.7 Z" fill="#7ed2f5"/><circle cx="8" cy="2.5" r="1.8" fill="#f0f0f0"/><circle cx="2.3" cy="13" r="1.8" fill="#f0f0f0"/><circle cx="13.7" cy="13" r="1.8" fill="#f0f0f0"/></svg>
<div class="t" style="left:1524px;top:130.2px;font-size:11.5px;letter-spacing:-0.35px">Square_Plushie.1</div>
<svg style="left:1620px;top:131.66px" width="11" height="11" viewBox="0 0 11 11" ><rect x="0" y="0" width="11" height="11" rx="1.5" fill="#4a4a4a"/><path d="M3 8 L8 3" stroke="#2a2a2a" stroke-width="1.6"/></svg>
<svg style="left:1637.5px;top:128.16px" width="6" height="17" viewBox="0 0 6 17" ><circle cx="3" cy="3" r="2.8" fill="#4a4a4a"/><circle cx="3" cy="13" r="2.8" fill="#4a4a4a"/></svg>
<svg style="left:1671px;top:129.16px" width="15" height="15" viewBox="0 0 15 15" ><rect x="0.5" y="0.5" width="14" height="14" fill="#cfcfcf"/><rect x="2.5" y="2.5" width="5" height="5" fill="#1e1e1e"/><rect x="7.5" y="7.5" width="5" height="5" fill="#1e1e1e"/></svg>
<svg style="left:1691px;top:129.16px" width="15" height="16" viewBox="0 0 15 16" ><path d="M1.5 15.5 V1.5 H14" stroke="#8a86ee" stroke-width="1.8" fill="none"/><path d="M4 4 H11 Q10.5 10 4 11 Z" fill="#cfcfcf"/></svg>
<svg style="left:1712px;top:126.96px" width="20" height="20" viewBox="0 0 20 20" ><rect x="0" y="0" width="20" height="20" fill="#777"/><rect x="0.5" y="0.5" width="19" height="19" fill="none" stroke="#555" stroke-width="1"/><circle cx="10" cy="10" r="8.5" fill="#d040c0"/><circle cx="4.5" cy="14" r="2.4" fill="#e8e8e8" opacity="0.75"/><circle cx="15.5" cy="14" r="2.4" fill="#e8e8e8" opacity="0.75"/><circle cx="10" cy="10" r="8.5" fill="url(#sphG)"/></svg>
<div class="ab" style="left:1494px;top:157.7px;width:9px;height:1px;background:#5a5a5a"></div>
<svg style="left:1503px;top:150.155px" width="16" height="16" viewBox="0 0 16 16" ><path d="M8 3 L13.3 12.7 H2.7 Z" fill="#7ed2f5"/><circle cx="8" cy="2.5" r="1.8" fill="#f0f0f0"/><circle cx="2.3" cy="13" r="1.8" fill="#f0f0f0"/><circle cx="13.7" cy="13" r="1.8" fill="#f0f0f0"/></svg>
<div class="t" style="left:1524px;top:151.5px;font-size:11.5px;letter-spacing:-0.35px">Square_Plushie</div>
<svg style="left:1620px;top:152.99px" width="11" height="11" viewBox="0 0 11 11" ><rect x="0" y="0" width="11" height="11" rx="1.5" fill="#4a4a4a"/><path d="M3 8 L8 3" stroke="#2a2a2a" stroke-width="1.6"/></svg>
<svg style="left:1637.5px;top:149.49px" width="6" height="17" viewBox="0 0 6 17" ><circle cx="3" cy="3" r="2.8" fill="#4a4a4a"/><circle cx="3" cy="13" r="2.8" fill="#4a4a4a"/></svg>
<svg style="left:1671px;top:150.49px" width="15" height="15" viewBox="0 0 15 15" ><rect x="0.5" y="0.5" width="14" height="14" fill="#cfcfcf"/><rect x="2.5" y="2.5" width="5" height="5" fill="#1e1e1e"/><rect x="7.5" y="7.5" width="5" height="5" fill="#1e1e1e"/></svg>
<svg style="left:1691px;top:150.49px" width="15" height="16" viewBox="0 0 15 16" ><path d="M1.5 15.5 V1.5 H14" stroke="#8a86ee" stroke-width="1.8" fill="none"/><path d="M4 4 H11 Q10.5 10 4 11 Z" fill="#cfcfcf"/></svg>
<div class="ab" style="left:1494px;top:179.0px;width:9px;height:1px;background:#5a5a5a"></div>
<svg style="left:1503px;top:171.48499999999999px" width="16" height="16" viewBox="0 0 16 16" ><path d="M8 3 L13.3 12.7 H2.7 Z" fill="#7ed2f5"/><circle cx="8" cy="2.5" r="1.8" fill="#f0f0f0"/><circle cx="2.3" cy="13" r="1.8" fill="#f0f0f0"/><circle cx="13.7" cy="13" r="1.8" fill="#f0f0f0"/></svg>
<div class="t" style="left:1524px;top:172.8px;font-size:11.5px;letter-spacing:-0.35px">Star_Plush UV.1</div>
<svg style="left:1620px;top:174.32px" width="11" height="11" viewBox="0 0 11 11" ><rect x="0" y="0" width="11" height="11" rx="1.5" fill="#4a4a4a"/><path d="M3 8 L8 3" stroke="#2a2a2a" stroke-width="1.6"/></svg>
<svg style="left:1637.5px;top:170.82px" width="6" height="17" viewBox="0 0 6 17" ><circle cx="3" cy="3" r="2.8" fill="#4a4a4a"/><circle cx="3" cy="13" r="2.8" fill="#4a4a4a"/></svg>
<svg style="left:1670px;top:171.82px" width="16" height="15" viewBox="0 0 16 15" ><rect x="0.5" y="0.5" width="15" height="14" rx="2" fill="#cfcfcf"/><path d="M2.5 7.5 Q8 2 13.5 7.5 Q8 13 2.5 7.5 Z" fill="#2a2a2a"/><circle cx="8" cy="7.5" r="2.2" fill="#cfcfcf"/><circle cx="8" cy="7.5" r="1" fill="#2a2a2a"/></svg>
<svg style="left:1693px;top:171.82px" width="15" height="15" viewBox="0 0 15 15" ><rect x="0.5" y="0.5" width="14" height="14" fill="#cfcfcf"/><rect x="2.5" y="2.5" width="5" height="5" fill="#1e1e1e"/><rect x="7.5" y="7.5" width="5" height="5" fill="#1e1e1e"/></svg>
<svg style="left:1713px;top:171.82px" width="15" height="16" viewBox="0 0 15 16" ><path d="M1.5 15.5 V1.5 H14" stroke="#8a86ee" stroke-width="1.8" fill="none"/><path d="M4 4 H11 Q10.5 10 4 11 Z" fill="#cfcfcf"/></svg>
<svg style="left:1734px;top:169.62px" width="20" height="20" viewBox="0 0 20 20" ><rect x="0" y="0" width="20" height="20" fill="#777"/><rect x="0.5" y="0.5" width="19" height="19" fill="none" stroke="#555" stroke-width="1"/><circle cx="10" cy="10" r="8.5" fill="#d8c070"/><circle cx="4.5" cy="14" r="2.4" fill="#c0a858" opacity="0.75"/><circle cx="15.5" cy="14" r="2.4" fill="#c0a858" opacity="0.75"/><circle cx="10" cy="10" r="8.5" fill="url(#sphG)"/></svg>
<div class="ab" style="left:1494px;top:200.3px;width:9px;height:1px;background:#5a5a5a"></div>
<svg style="left:1489.5px;top:195.81499999999997px" width="10" height="10" viewBox="0 0 10 10" ><rect x="0.5" y="0.5" width="9" height="9" fill="#2a2a2a" stroke="#8a8a8a" stroke-width="1"/><path d="M2.5 5 H7.5 M5 2.5 V7.5" stroke="#bdbdbd" stroke-width="1"/></svg>
<svg style="left:1503px;top:192.81499999999997px" width="16" height="16" viewBox="0 0 16 16" ><path d="M8 3 L13.3 12.7 H2.7 Z" fill="#7ed2f5"/><circle cx="8" cy="2.5" r="1.8" fill="#f0f0f0"/><circle cx="2.3" cy="13" r="1.8" fill="#f0f0f0"/><circle cx="13.7" cy="13" r="1.8" fill="#f0f0f0"/></svg>
<div class="t" style="left:1524px;top:194.1px;font-size:11.5px;letter-spacing:-0.35px">Star_Plush UV.1</div>
<svg style="left:1620px;top:195.64999999999998px" width="11" height="11" viewBox="0 0 11 11" ><rect x="0" y="0" width="11" height="11" rx="1.5" fill="#4a4a4a"/><path d="M3 8 L8 3" stroke="#2a2a2a" stroke-width="1.6"/></svg>
<svg style="left:1637.5px;top:192.14999999999998px" width="6" height="17" viewBox="0 0 6 17" ><circle cx="3" cy="3" r="2.8" fill="#4a4a4a"/><circle cx="3" cy="13" r="2.8" fill="#4a4a4a"/></svg>
<svg style="left:1671px;top:193.14999999999998px" width="15" height="15" viewBox="0 0 15 15" ><rect x="0.5" y="0.5" width="14" height="14" fill="#cfcfcf"/><rect x="2.5" y="2.5" width="5" height="5" fill="#1e1e1e"/><rect x="7.5" y="7.5" width="5" height="5" fill="#1e1e1e"/></svg>
<svg style="left:1691px;top:193.14999999999998px" width="15" height="16" viewBox="0 0 15 16" ><path d="M1.5 15.5 V1.5 H14" stroke="#8a86ee" stroke-width="1.8" fill="none"/><path d="M4 4 H11 Q10.5 10 4 11 Z" fill="#cfcfcf"/></svg>
<svg style="left:1712px;top:190.95px" width="20" height="20" viewBox="0 0 20 20" ><rect x="0" y="0" width="20" height="20" fill="#777"/><rect x="0.5" y="0.5" width="19" height="19" fill="none" stroke="#555" stroke-width="1"/><circle cx="10" cy="10" r="8.5" fill="#d8c070"/><circle cx="4.5" cy="14" r="2.4" fill="#c0a858" opacity="0.75"/><circle cx="15.5" cy="14" r="2.4" fill="#c0a858" opacity="0.75"/><circle cx="10" cy="10" r="8.5" fill="url(#sphG)"/></svg>
<div class="ab" style="left:1494px;top:221.6px;width:9px;height:1px;background:#5a5a5a"></div>
<svg style="left:1503px;top:214.14499999999998px" width="16" height="16" viewBox="0 0 16 16" ><path d="M8 3 L13.3 12.7 H2.7 Z" fill="#7ed2f5"/><circle cx="8" cy="2.5" r="1.8" fill="#f0f0f0"/><circle cx="2.3" cy="13" r="1.8" fill="#f0f0f0"/><circle cx="13.7" cy="13" r="1.8" fill="#f0f0f0"/></svg>
<div class="t" style="left:1524px;top:215.5px;font-size:11.5px;letter-spacing:-0.35px">Star_Plush UV</div>
<svg style="left:1620px;top:216.98px" width="11" height="11" viewBox="0 0 11 11" ><rect x="0" y="0" width="11" height="11" rx="1.5" fill="#4a4a4a"/><path d="M3 8 L8 3" stroke="#2a2a2a" stroke-width="1.6"/></svg>
<svg style="left:1637.5px;top:213.48px" width="6" height="17" viewBox="0 0 6 17" ><circle cx="3" cy="3" r="2.8" fill="#4a4a4a"/><circle cx="3" cy="13" r="2.8" fill="#4a4a4a"/></svg>
<svg style="left:1671px;top:214.48px" width="15" height="15" viewBox="0 0 15 15" ><rect x="0.5" y="0.5" width="14" height="14" fill="#cfcfcf"/><rect x="2.5" y="2.5" width="5" height="5" fill="#1e1e1e"/><rect x="7.5" y="7.5" width="5" height="5" fill="#1e1e1e"/></svg>
<svg style="left:1691px;top:214.48px" width="15" height="16" viewBox="0 0 15 16" ><path d="M1.5 15.5 V1.5 H14" stroke="#8a86ee" stroke-width="1.8" fill="none"/><path d="M4 4 H11 Q10.5 10 4 11 Z" fill="#cfcfcf"/></svg>
<svg style="left:1712px;top:212.28px" width="20" height="20" viewBox="0 0 20 20" ><rect x="0" y="0" width="20" height="20" fill="#777"/><rect x="0.5" y="0.5" width="19" height="19" fill="none" stroke="#555" stroke-width="1"/><circle cx="10" cy="10" r="8.5" fill="#d8c070"/><circle cx="4.5" cy="14" r="2.4" fill="#c0a858" opacity="0.75"/><circle cx="15.5" cy="14" r="2.4" fill="#c0a858" opacity="0.75"/><circle cx="10" cy="10" r="8.5" fill="url(#sphG)"/></svg>
<div class="ab" style="left:1494px;top:243.0px;width:9px;height:1px;background:#5a5a5a"></div>
<svg style="left:1489.5px;top:238.475px" width="10" height="10" viewBox="0 0 10 10" ><rect x="0.5" y="0.5" width="9" height="9" fill="#2a2a2a" stroke="#8a8a8a" stroke-width="1"/><path d="M2.5 5 H7.5 M5 2.5 V7.5" stroke="#bdbdbd" stroke-width="1"/></svg>
<svg style="left:1503px;top:235.475px" width="16" height="16" viewBox="0 0 16 16" ><path d="M8 3 L13.3 12.7 H2.7 Z" fill="#7ed2f5"/><circle cx="8" cy="2.5" r="1.8" fill="#f0f0f0"/><circle cx="2.3" cy="13" r="1.8" fill="#f0f0f0"/><circle cx="13.7" cy="13" r="1.8" fill="#f0f0f0"/></svg>
<div class="t" style="left:1524px;top:236.8px;font-size:11.5px;letter-spacing:-0.35px">Bit Plush</div>
<svg style="left:1620px;top:238.31px" width="11" height="11" viewBox="0 0 11 11" ><rect x="0" y="0" width="11" height="11" rx="1.5" fill="#4a4a4a"/><path d="M3 8 L8 3" stroke="#2a2a2a" stroke-width="1.6"/></svg>
<svg style="left:1637.5px;top:234.81px" width="6" height="17" viewBox="0 0 6 17" ><circle cx="3" cy="3" r="2.8" fill="#e5575a"/><circle cx="3" cy="13" r="2.8" fill="#e5575a"/></svg>
<svg style="left:1671px;top:235.81px" width="15" height="15" viewBox="0 0 15 15" ><rect x="0.5" y="0.5" width="14" height="14" fill="#cfcfcf"/><rect x="2.5" y="2.5" width="5" height="5" fill="#1e1e1e"/><rect x="7.5" y="7.5" width="5" height="5" fill="#1e1e1e"/></svg>
<svg style="left:1691px;top:235.81px" width="15" height="16" viewBox="0 0 15 16" ><path d="M1.5 15.5 V1.5 H14" stroke="#8a86ee" stroke-width="1.8" fill="none"/><path d="M4 4 H11 Q10.5 10 4 11 Z" fill="#cfcfcf"/></svg>
<svg style="left:1712px;top:233.61px" width="20" height="20" viewBox="0 0 20 20" ><rect x="0" y="0" width="20" height="20" fill="#777"/><rect x="0.5" y="0.5" width="19" height="19" fill="none" stroke="#555" stroke-width="1"/><circle cx="10" cy="10" r="8.5" fill="#4a3d9e"/><circle cx="4.5" cy="14" r="2.4" fill="#c8b050" opacity="0.75"/><circle cx="15.5" cy="14" r="2.4" fill="#c8b050" opacity="0.75"/><circle cx="10" cy="10" r="8.5" fill="url(#sphG)"/></svg>
<div class="ab" style="left:1494px;top:264.3px;width:9px;height:1px;background:#5a5a5a"></div>
<svg style="left:1489.5px;top:259.805px" width="10" height="10" viewBox="0 0 10 10" ><rect x="0.5" y="0.5" width="9" height="9" fill="#2a2a2a" stroke="#8a8a8a" stroke-width="1"/><path d="M2.5 5 H7.5 M5 2.5 V7.5" stroke="#bdbdbd" stroke-width="1"/></svg>
<svg style="left:1503px;top:256.805px" width="16" height="16" viewBox="0 0 16 16" ><path d="M8 3 L13.3 12.7 H2.7 Z" fill="#7ed2f5"/><circle cx="8" cy="2.5" r="1.8" fill="#f0f0f0"/><circle cx="2.3" cy="13" r="1.8" fill="#f0f0f0"/><circle cx="13.7" cy="13" r="1.8" fill="#f0f0f0"/></svg>
<div class="t" style="left:1524px;top:258.1px;font-size:11.5px;letter-spacing:-0.35px">Crown Plush</div>
<svg style="left:1620px;top:259.64px" width="11" height="11" viewBox="0 0 11 11" ><rect x="0" y="0" width="11" height="11" rx="1.5" fill="#4a4a4a"/><path d="M3 8 L8 3" stroke="#2a2a2a" stroke-width="1.6"/></svg>
<svg style="left:1637.5px;top:256.14px" width="6" height="17" viewBox="0 0 6 17" ><circle cx="3" cy="3" r="2.8" fill="#e5575a"/><circle cx="3" cy="13" r="2.8" fill="#e5575a"/></svg>
<svg style="left:1671px;top:257.14px" width="15" height="15" viewBox="0 0 15 15" ><rect x="0.5" y="0.5" width="14" height="14" fill="#cfcfcf"/><rect x="2.5" y="2.5" width="5" height="5" fill="#1e1e1e"/><rect x="7.5" y="7.5" width="5" height="5" fill="#1e1e1e"/></svg>
<svg style="left:1691px;top:257.14px" width="15" height="16" viewBox="0 0 15 16" ><path d="M1.5 15.5 V1.5 H14" stroke="#8a86ee" stroke-width="1.8" fill="none"/><path d="M4 4 H11 Q10.5 10 4 11 Z" fill="#cfcfcf"/></svg>
<svg style="left:1712px;top:254.94px" width="20" height="20" viewBox="0 0 20 20" ><rect x="0" y="0" width="20" height="20" fill="#777"/><rect x="0.5" y="0.5" width="19" height="19" fill="none" stroke="#555" stroke-width="1"/><circle cx="10" cy="10" r="8.5" fill="#3aaed8"/><circle cx="4.5" cy="14" r="2.4" fill="#e8e8e8" opacity="0.75"/><circle cx="15.5" cy="14" r="2.4" fill="#e8e8e8" opacity="0.75"/><circle cx="10" cy="10" r="8.5" fill="url(#sphG)"/></svg>
<div class="ab" style="left:1494px;top:285.6px;width:9px;height:1px;background:#5a5a5a"></div>
<svg style="left:1489.5px;top:281.135px" width="10" height="10" viewBox="0 0 10 10" ><rect x="0.5" y="0.5" width="9" height="9" fill="#2a2a2a" stroke="#8a8a8a" stroke-width="1"/><path d="M2.5 5 H7.5 M5 2.5 V7.5" stroke="#bdbdbd" stroke-width="1"/></svg>
<svg style="left:1503px;top:278.135px" width="16" height="16" viewBox="0 0 16 16" ><path d="M8 3 L13.3 12.7 H2.7 Z" fill="#7ed2f5"/><circle cx="8" cy="2.5" r="1.8" fill="#f0f0f0"/><circle cx="2.3" cy="13" r="1.8" fill="#f0f0f0"/><circle cx="13.7" cy="13" r="1.8" fill="#f0f0f0"/></svg>
<div class="t" style="left:1524px;top:279.5px;font-size:11.5px;letter-spacing:-0.35px">Crown Plush</div>
<svg style="left:1620px;top:280.96999999999997px" width="11" height="11" viewBox="0 0 11 11" ><rect x="0" y="0" width="11" height="11" rx="1.5" fill="#4a4a4a"/><path d="M3 8 L8 3" stroke="#2a2a2a" stroke-width="1.6"/></svg>
<svg style="left:1637.5px;top:277.46999999999997px" width="6" height="17" viewBox="0 0 6 17" ><circle cx="3" cy="3" r="2.8" fill="#e5575a"/><circle cx="3" cy="13" r="2.8" fill="#e5575a"/></svg>
<svg style="left:1671px;top:278.46999999999997px" width="15" height="15" viewBox="0 0 15 15" ><rect x="0.5" y="0.5" width="14" height="14" fill="#cfcfcf"/><rect x="2.5" y="2.5" width="5" height="5" fill="#1e1e1e"/><rect x="7.5" y="7.5" width="5" height="5" fill="#1e1e1e"/></svg>
<svg style="left:1691px;top:278.46999999999997px" width="15" height="16" viewBox="0 0 15 16" ><path d="M1.5 15.5 V1.5 H14" stroke="#8a86ee" stroke-width="1.8" fill="none"/><path d="M4 4 H11 Q10.5 10 4 11 Z" fill="#cfcfcf"/></svg>
<svg style="left:1712px;top:276.27px" width="20" height="20" viewBox="0 0 20 20" ><rect x="0" y="0" width="20" height="20" fill="#777"/><rect x="0.5" y="0.5" width="19" height="19" fill="none" stroke="#555" stroke-width="1"/><circle cx="10" cy="10" r="8.5" fill="#3aaed8"/><circle cx="4.5" cy="14" r="2.4" fill="#e8e8e8" opacity="0.75"/><circle cx="15.5" cy="14" r="2.4" fill="#e8e8e8" opacity="0.75"/><circle cx="10" cy="10" r="8.5" fill="url(#sphG)"/></svg>
<div class="ab" style="left:1494px;top:307.0px;width:9px;height:1px;background:#5a5a5a"></div>
<svg style="left:1503px;top:299.465px" width="16" height="16" viewBox="0 0 16 16" ><path d="M8 3 L13.3 12.7 H2.7 Z" fill="#7ed2f5"/><circle cx="8" cy="2.5" r="1.8" fill="#f0f0f0"/><circle cx="2.3" cy="13" r="1.8" fill="#f0f0f0"/><circle cx="13.7" cy="13" r="1.8" fill="#f0f0f0"/></svg>
<div class="t" style="left:1524px;top:300.8px;font-size:11.5px;letter-spacing:-0.35px">Star Plush</div>
<svg style="left:1620px;top:302.29999999999995px" width="11" height="11" viewBox="0 0 11 11" ><rect x="0" y="0" width="11" height="11" rx="1.5" fill="#4a4a4a"/><path d="M3 8 L8 3" stroke="#2a2a2a" stroke-width="1.6"/></svg>
<svg style="left:1637.5px;top:298.79999999999995px" width="6" height="17" viewBox="0 0 6 17" ><circle cx="3" cy="3" r="2.8" fill="#e5575a"/><circle cx="3" cy="13" r="2.8" fill="#e5575a"/></svg>
<svg style="left:1670px;top:299.79999999999995px" width="15" height="16" viewBox="0 0 15 16" ><path d="M1.5 15.5 V1.5 H14" stroke="#8a86ee" stroke-width="1.8" fill="none"/><path d="M4 4 H11 Q10.5 10 4 11 Z" fill="#cfcfcf"/></svg>
<svg style="left:1691px;top:299.79999999999995px" width="15" height="15" viewBox="0 0 15 15" ><rect x="0.5" y="0.5" width="14" height="14" fill="#cfcfcf"/><rect x="2.5" y="2.5" width="5" height="5" fill="#1e1e1e"/><rect x="7.5" y="7.5" width="5" height="5" fill="#1e1e1e"/></svg>
<div class="ab" style="left:1494px;top:328.3px;width:9px;height:1px;background:#5a5a5a"></div>
<svg style="left:1489.5px;top:323.795px" width="10" height="10" viewBox="0 0 10 10" ><rect x="0.5" y="0.5" width="9" height="9" fill="#2a2a2a" stroke="#8a8a8a" stroke-width="1"/><path d="M2.5 5 H7.5 M5 2.5 V7.5" stroke="#bdbdbd" stroke-width="1"/></svg>
<svg style="left:1503px;top:320.795px" width="16" height="16" viewBox="0 0 16 16" ><rect x="1.5" y="2" width="13" height="12" rx="2" fill="none" stroke="#8a8a8a" stroke-width="1.3"/><circle cx="8" cy="8" r="4.8" fill="#4fd65a" stroke="#222" stroke-width="0.8"/></svg>
<div class="t" style="left:1524px;top:322.1px;font-size:11.5px;letter-spacing:-0.35px">Star Plush</div>
<svg style="left:1620px;top:323.63px" width="11" height="11" viewBox="0 0 11 11" ><rect x="0" y="0" width="11" height="11" rx="1.5" fill="#4a4a4a"/><path d="M3 8 L8 3" stroke="#2a2a2a" stroke-width="1.6"/></svg>
<svg style="left:1637.5px;top:320.13px" width="6" height="17" viewBox="0 0 6 17" ><circle cx="3" cy="3" r="2.8" fill="#e5575a"/><circle cx="3" cy="13" r="2.8" fill="#e5575a"/></svg>
<svg style="left:1648px;top:322.13px" width="14" height="12" viewBox="0 0 14 12" ><path d="M1 6 L5 10 L13 1.5" stroke="#4ad063" stroke-width="2" fill="none"/></svg>
<div class="ab" style="left:1494px;top:349.6px;width:9px;height:1px;background:#5a5a5a"></div>
<svg style="left:1503px;top:342.125px" width="16" height="16" viewBox="0 0 16 16" ><path d="M8 3 L13.3 12.7 H2.7 Z" fill="#7ed2f5"/><circle cx="8" cy="2.5" r="1.8" fill="#f0f0f0"/><circle cx="2.3" cy="13" r="1.8" fill="#f0f0f0"/><circle cx="13.7" cy="13" r="1.8" fill="#f0f0f0"/></svg>
<div class="t" style="left:1524px;top:343.5px;font-size:11.5px;letter-spacing:-0.35px">Star Plush</div>
<svg style="left:1620px;top:344.96px" width="11" height="11" viewBox="0 0 11 11" ><rect x="0" y="0" width="11" height="11" rx="1.5" fill="#4a4a4a"/><path d="M3 8 L8 3" stroke="#2a2a2a" stroke-width="1.6"/></svg>
<svg style="left:1637.5px;top:341.46px" width="6" height="17" viewBox="0 0 6 17" ><circle cx="3" cy="3" r="2.8" fill="#e5575a"/><circle cx="3" cy="13" r="2.8" fill="#e5575a"/></svg>
<svg style="left:1670px;top:342.46px" width="15" height="16" viewBox="0 0 15 16" ><path d="M1.5 15.5 V1.5 H14" stroke="#8a86ee" stroke-width="1.8" fill="none"/><path d="M4 4 H11 Q10.5 10 4 11 Z" fill="#cfcfcf"/></svg>
<svg style="left:1691px;top:342.46px" width="15" height="15" viewBox="0 0 15 15" ><rect x="0.5" y="0.5" width="14" height="14" fill="#cfcfcf"/><rect x="2.5" y="2.5" width="5" height="5" fill="#1e1e1e"/><rect x="7.5" y="7.5" width="5" height="5" fill="#1e1e1e"/></svg>
<div class="ab" style="left:1666px;top:83px;width:1px;height:967px;background:#212121"></div>
</body></html>
